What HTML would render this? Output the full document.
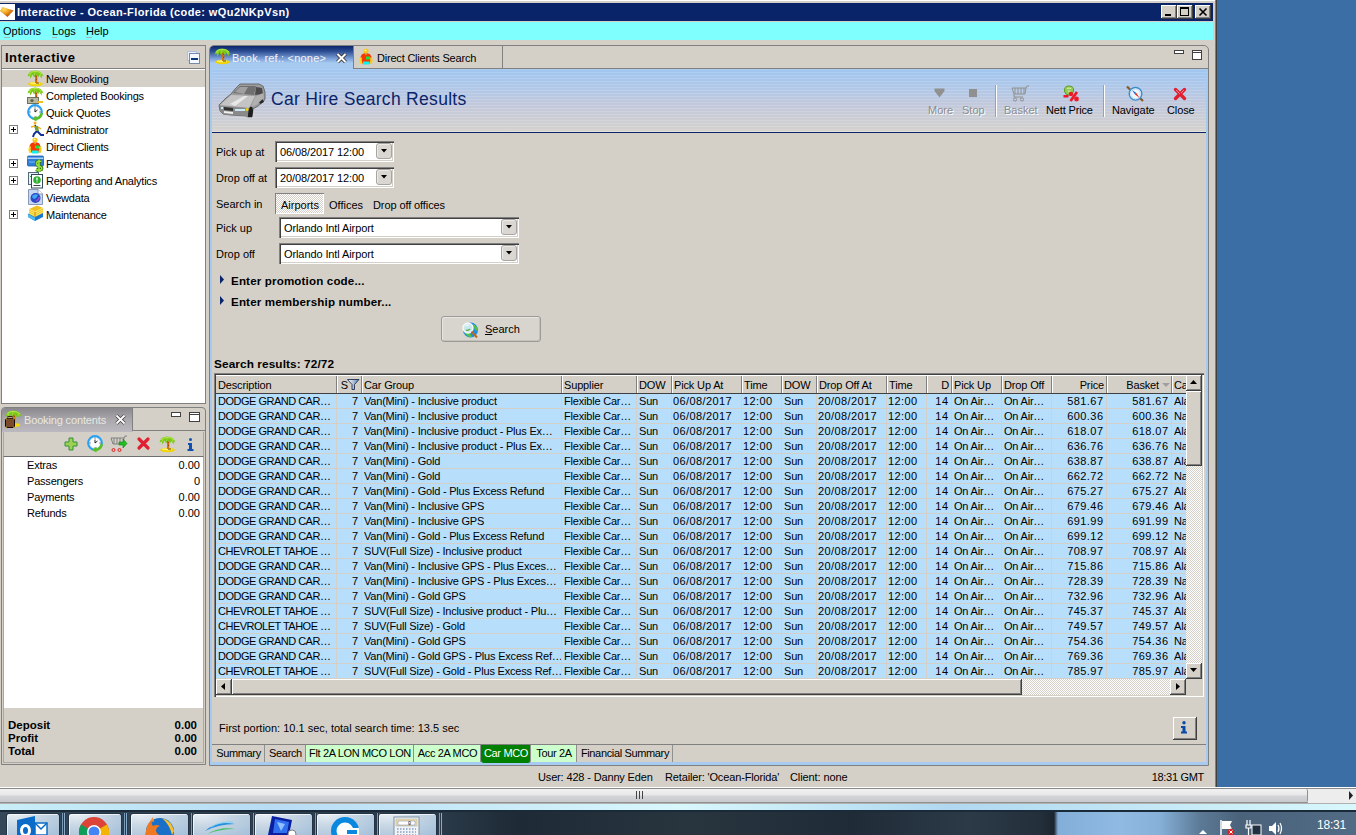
<!DOCTYPE html><html><head><meta charset="utf-8"><style>
*{margin:0;padding:0;box-sizing:border-box}
html,body{width:1356px;height:835px;overflow:hidden;background:#3A6EA5;font-family:"Liberation Sans",sans-serif;font-size:11px;color:#000}
.ab{position:absolute}
.t{position:absolute;white-space:nowrap;line-height:13px}
.sunk{border-style:solid;border-width:1px;border-color:#808080 #fff #fff #808080}
.rais{position:absolute;background:#D4D0C8;box-shadow:inset -1px -1px #404040,inset 1px 1px #fff,inset -2px -2px #808080}
.chk{background-color:#fff;background-image:linear-gradient(45deg,#D4D0C8 25%,transparent 25%,transparent 75%,#D4D0C8 75%),linear-gradient(45deg,#D4D0C8 25%,transparent 25%,transparent 75%,#D4D0C8 75%);background-size:2px 2px;background-position:0 0,1px 1px}
svg{position:absolute;overflow:visible}
</style></head><body>
<div class="ab" style="left:0px;top:0px;width:1217px;height:787px;background:#D4D0C8"></div>
<div class="ab" style="left:0px;top:0px;width:1217px;height:1px;background:#fff"></div>
<div class="ab" style="left:1215px;top:0px;width:1px;height:787px;background:#808080"></div>
<div class="ab" style="left:1216px;top:0px;width:1px;height:787px;background:#404040"></div>
<div class="ab" style="left:0px;top:3px;width:1213px;height:18px;background:#0A246A"></div>
<div class="ab" style="left:0px;top:4px;width:15px;height:16px;background:#fff"></div>
<svg style="left:0;top:0" width="15" height="20"><defs><radialGradient id="gem" cx="0.3" cy="0.25" r="0.8"><stop offset="0" stop-color="#FFE060"/><stop offset="0.45" stop-color="#F0A020"/><stop offset="1" stop-color="#B84000"/></radialGradient></defs><polygon points="0,11 2.5,7 13.5,10.5 7.5,17" fill="url(#gem)"/></svg>
<div class="t" style="left:17px;top:6px;font-size:11px;color:#fff;font-weight:bold;letter-spacing:0.4px">Interactive - Ocean-Florida (code: wQu2NKpVsn)</div>
<div class="rais" style="left:1161px;top:5px;width:16px;height:14px"></div>
<div class="rais" style="left:1177px;top:5px;width:16px;height:14px"></div>
<div class="rais" style="left:1195px;top:5px;width:16px;height:14px"></div>
<div class="ab" style="left:1165px;top:14px;width:6px;height:2px;background:#000"></div>
<div class="ab" style="left:1180px;top:7px;width:9px;height:9px;border:1px solid #000;border-top-width:2px"></div>
<svg style="left:1195px;top:5px" width="16" height="14"><path d="M4.5,3.5 L11.5,10.5 M11.5,3.5 L4.5,10.5" stroke="#000" stroke-width="1.6"/></svg>
<div class="ab" style="left:0px;top:22px;width:1213px;height:18px;background:#80FFFF"></div>
<div class="t" style="left:3px;top:25px;font-size:11px;">Options</div>
<div class="t" style="left:52px;top:25px;font-size:11px;">Logs</div>
<div class="t" style="left:86px;top:25px;font-size:11px;">Help</div>
<div class="ab" style="left:4px;top:37px;width:6px;height:1px;background:#A0B8B8"></div>
<div class="ab" style="left:52px;top:37px;width:5px;height:1px;background:#A0B8B8"></div>
<div class="ab" style="left:86px;top:37px;width:6px;height:1px;background:#A0B8B8"></div>
<div class="ab" style="left:1px;top:45px;width:205px;height:359px;border:1px solid #808080;background:#fff"></div>
<div class="ab" style="left:2px;top:46px;width:203px;height:22px;background:#D4D0C8"></div>
<div class="ab" style="left:2px;top:68px;width:203px;height:1px;background:#808080"></div>
<div class="t" style="left:5px;top:51px;font-size:13px;font-weight:bold;letter-spacing:0.5px">Interactive</div>
<div class="ab" style="left:187px;top:51px;width:10px;height:10px;border:1px solid #B0C0D8;background:#E8F0FF"></div>
<div class="ab" style="left:189px;top:53px;width:11px;height:11px;border:1px solid #7888A8;background:#F4F8FF"></div>
<div class="ab" style="left:191px;top:58px;width:7px;height:2px;background:#0A3A7A"></div>
<div class="ab" style="left:2px;top:70px;width:203px;height:17px;background:#D4D0C8"></div>
<div class="t" style="left:46px;top:73px;font-size:11px;letter-spacing:-0.2px">New Booking</div>
<div class="t" style="left:46px;top:90px;font-size:11px;letter-spacing:-0.2px">Completed Bookings</div>
<div class="t" style="left:46px;top:107px;font-size:11px;letter-spacing:-0.2px">Quick Quotes</div>
<div class="t" style="left:46px;top:124px;font-size:11px;letter-spacing:-0.2px">Administrator</div>
<div class="ab" style="left:9px;top:125px;width:9px;height:9px;border:1px solid #808080;background:#fff"></div>
<div class="ab" style="left:11px;top:129px;width:5px;height:1px;background:#000"></div>
<div class="ab" style="left:13px;top:127px;width:1px;height:5px;background:#000"></div>
<div class="t" style="left:46px;top:141px;font-size:11px;letter-spacing:-0.2px">Direct Clients</div>
<div class="t" style="left:46px;top:158px;font-size:11px;letter-spacing:-0.2px">Payments</div>
<div class="ab" style="left:9px;top:159px;width:9px;height:9px;border:1px solid #808080;background:#fff"></div>
<div class="ab" style="left:11px;top:163px;width:5px;height:1px;background:#000"></div>
<div class="ab" style="left:13px;top:161px;width:1px;height:5px;background:#000"></div>
<div class="t" style="left:46px;top:175px;font-size:11px;letter-spacing:-0.2px">Reporting and Analytics</div>
<div class="ab" style="left:9px;top:176px;width:9px;height:9px;border:1px solid #808080;background:#fff"></div>
<div class="ab" style="left:11px;top:180px;width:5px;height:1px;background:#000"></div>
<div class="ab" style="left:13px;top:178px;width:1px;height:5px;background:#000"></div>
<div class="t" style="left:46px;top:192px;font-size:11px;letter-spacing:-0.2px">Viewdata</div>
<div class="t" style="left:46px;top:209px;font-size:11px;letter-spacing:-0.2px">Maintenance</div>
<div class="ab" style="left:9px;top:210px;width:9px;height:9px;border:1px solid #808080;background:#fff"></div>
<div class="ab" style="left:11px;top:214px;width:5px;height:1px;background:#000"></div>
<div class="ab" style="left:13px;top:212px;width:1px;height:5px;background:#000"></div>
<svg style="left:27px;top:70px" width="17" height="17"><ellipse cx="8.5" cy="14" rx="7.5" ry="2.2" fill="#F2D200"/><ellipse cx="8" cy="13.2" rx="5" ry="1" fill="#FFF070"/><path d="M9,13 L12,13" stroke="#504010" stroke-width="1"/><path d="M8,3 Q10,8 9,13" stroke="#D07010" stroke-width="2.2" fill="none"/><path d="M8.6,6 L9.6,6.5 M9.2,9 L10,9.5" stroke="#803000" stroke-width="1"/><path d="M0.5,6.5 Q1.5,0.5 8,0.5 Q15,0.5 16.5,6.5 L15,5.5 L14.5,8.5 L12.5,5 L11,7.5 L9,4 L7,7.5 L5.5,4.5 L3.5,8.5 L2.5,5.5 Z" fill="#78C818"/><path d="M2,4 Q5,1 8,1.5 Q12,1 15,4" stroke="#B8E848" stroke-width="1" fill="none"/><path d="M4,3 L3,6 M13,3 L14,6 M8,2 L7.5,5" stroke="#A8E038" stroke-width="0.8"/></svg>
<svg style="left:27px;top:87px" width="17" height="17"><path d="M8,3 Q10,8 9,13" stroke="#D07010" stroke-width="2.2" fill="none"/><path d="M8.6,6 L9.6,6.5 M9.2,9 L10,9.5" stroke="#803000" stroke-width="1"/><path d="M0.5,6.5 Q1.5,0.5 8,0.5 Q15,0.5 16.5,6.5 L15,5.5 L14.5,8.5 L12.5,5 L11,7.5 L9,4 L7,7.5 L5.5,4.5 L3.5,8.5 L2.5,5.5 Z" fill="#78C818"/><path d="M2,4 Q5,1 8,1.5 Q12,1 15,4" stroke="#B8E848" stroke-width="1" fill="none"/><path d="M4,3 L3,6 M13,3 L14,6 M8,2 L7.5,5" stroke="#A8E038" stroke-width="0.8"/></svg>
<svg style="left:27px;top:97px" width="17" height="8"><rect x="0.5" y="0.5" width="11" height="6" fill="#B8B8A0" stroke="#707060"/><circle cx="5" cy="3.5" r="1.6" fill="#606050"/><path d="M11,4 L16,4 L16,6 L11,6" fill="#F0C020"/></svg>
<svg style="left:27px;top:104px" width="17" height="17"><circle cx="8" cy="8" r="6.8" fill="#fff" stroke="#2AA0F0" stroke-width="2.2"/><circle cx="8" cy="8" r="5.2" fill="none" stroke="#D8E0E8" stroke-width="0.6"/><path d="M8,2.5 L8,3.5 M8,12.5 L8,13.5 M2.5,8 L3.5,8 M12.5,8 L13.5,8" stroke="#303030" stroke-width="0.9"/><path d="M8,4.5 L8,8 L10.5,6" stroke="#202020" stroke-width="1" fill="none"/><path d="M9,14.8 Q14,14 14.8,9" stroke="#58C020" stroke-width="2.4" fill="none"/><path d="M5,15 L9.5,11.8 L9.5,17.5Z" fill="#58C020"/></svg>
<svg style="left:28px;top:121px" width="17" height="17"><circle cx="7" cy="2" r="1.5" fill="#F0B020"/><path d="M7,4 L9,10 L13,14 L16,14 M9,10 L6,13 L5,16" stroke="#1030A0" stroke-width="2" fill="none"/><path d="M6,5 L10,5 L11,10 L8,10 Z" fill="#70A040"/><path d="M3,6 L7,5 M10,6 L13,8" stroke="#F0B020" stroke-width="1.5"/></svg>
<svg style="left:27px;top:137px" width="17" height="17"><ellipse cx="8" cy="3" rx="2.6" ry="2.3" fill="#F8C818"/><ellipse cx="7.5" cy="2.5" rx="1" ry="0.7" fill="#FFF8C0"/><path d="M2.5,9.5 Q3,5.2 8,5.2 Q13,5.2 13.5,9.5 L12.5,15.5 L3.5,15.5 Z" fill="#F43800"/><path d="M7,5.5 L8,7.5 L9,5.5Z" fill="#F8D020"/><path d="M3,9 Q0,12 2.5,16 L4.5,15.5 Q3,12 4,10Z" fill="#F8D818"/><path d="M13,9 Q16,12 13.5,16 L11.5,15.5 Q13,12 12,10Z" fill="#F8C818"/><rect x="8" y="8.5" width="4" height="3" fill="#20E040"/><rect x="5" y="13.5" width="6.5" height="3" fill="#10F0F0"/></svg>
<svg style="left:27px;top:155px" width="18" height="18"><rect x="0.5" y="1" width="16" height="10" rx="1" fill="#2F7FD8" stroke="#1A5AA8" stroke-width="0.8"/><rect x="0.5" y="2.5" width="16" height="1.5" fill="#A8D0F8"/><path d="M2,7 L8,7" stroke="#80B8F0" stroke-width="1"/><path d="M14.5,6.5 Q10,5 9.5,8.5 Q10,11 13,11.5 Q15.5,12.5 14.5,14.5 Q12,16 9,14.5 M12,4.5 L12,17" stroke="#2A7010" stroke-width="3.2" fill="none"/><path d="M14.5,6.5 Q10,5 9.5,8.5 Q10,11 13,11.5 Q15.5,12.5 14.5,14.5 Q12,16 9,14.5 M12,4.5 L12,17" stroke="#98E040" stroke-width="1.6" fill="none"/></svg>
<svg style="left:28px;top:172px" width="17" height="17"><rect x="0.5" y="0.5" width="10" height="12" fill="#E8F0F8" stroke="#506878"/><path d="M2,5 Q3,3 5,4" stroke="#40A040" fill="none"/><rect x="3.5" y="2.5" width="11" height="13.5" fill="#fff" stroke="#304858"/><circle cx="9" cy="8" r="3.8" fill="#30B030"/><path d="M9,5.5 L9,8.5 M9,9.5 L9,10.3" stroke="#fff" stroke-width="1.3"/><path d="M5.5,13.5 L12.5,13.5" stroke="#304858"/></svg>
<svg style="left:28px;top:189px" width="17" height="17"><path d="M0.5,0.5 L10,0.5 L14.5,5 L14.5,15.5 L0.5,15.5Z" fill="#C8D8F0" stroke="#8898B8"/><path d="M10,0.5 L10,5 L14.5,5" fill="#fff" stroke="#8898B8"/><circle cx="7.5" cy="9" r="5" fill="#2848C8"/><path d="M4,7 Q7,4 10,6 Q9,9 6,10 Q4,9 4,7Z" fill="#40A8F0"/><path d="M8,12 Q11,11 11.5,8" stroke="#9050D0" stroke-width="1.5" fill="none"/></svg>
<svg style="left:27px;top:205px" width="17" height="17"><path d="M1,9 L9,5 L16,8 L16,12 L8,16 L1,12Z" fill="#1878D0"/><path d="M1,9 L8,12.5 L8,16 L1,12Z" fill="#50B8F0"/><path d="M2,4 L10,0.5 L16,3 L16,8 L8,12 L2,9Z" fill="#F0C020"/><path d="M2,4 L8,7 L16,3 M2,6 L8,9 L16,5 M2,8 L8,11 L16,7" stroke="#FFF080" stroke-width="0.9" fill="none"/><path d="M8,7 L8,12" stroke="#C89000"/></svg>
<div class="ab" style="left:1px;top:407px;width:205px;height:358px;border:1px solid #808080;border-radius:4px 4px 0 0;background:#D4D0C8"></div>
<div class="ab" style="left:2px;top:408px;width:131px;height:24px;background:linear-gradient(#8A888C,#A8A6AA 45%,#BCBAC0 100%);border-radius:3px 0 0 0"></div>
<div class="ab" style="left:132px;top:408px;width:1px;height:23px;background:#808080"></div>
<div class="ab" style="left:133px;top:430px;width:72px;height:1px;background:#808080"></div>
<svg style="left:5px;top:410px" width="17" height="17"><path d="M8,3 Q10,8 9,13" stroke="#D07010" stroke-width="2.2" fill="none"/><path d="M8.6,6 L9.6,6.5 M9.2,9 L10,9.5" stroke="#803000" stroke-width="1"/><path d="M0.5,6.5 Q1.5,0.5 8,0.5 Q15,0.5 16.5,6.5 L15,5.5 L14.5,8.5 L12.5,5 L11,7.5 L9,4 L7,7.5 L5.5,4.5 L3.5,8.5 L2.5,5.5 Z" fill="#78C818"/><path d="M2,4 Q5,1 8,1.5 Q12,1 15,4" stroke="#B8E848" stroke-width="1" fill="none"/><path d="M4,3 L3,6 M13,3 L14,6 M8,2 L7.5,5" stroke="#A8E038" stroke-width="0.8"/></svg>
<svg style="left:5px;top:416px" width="16" height="12"><rect x="0.5" y="2.5" width="9" height="9" rx="1" fill="#7A4A2A" stroke="#1A0A00"/><path d="M0.5,2.5 h1 M8.5,2.5 h1 M0.5,11.5 h1 M8.5,11.5 h1" stroke="#F8E000" stroke-width="1.5"/><rect x="3" y="0.5" width="4" height="2" fill="none" stroke="#402010"/><path d="M10,7 L15,8 L15,10 L10,11Z" fill="#F8D800"/></svg>
<div class="t" style="left:24px;top:414px;font-size:11px;color:#E8E8E0;letter-spacing:-0.15px">Booking contents</div>
<svg style="left:115px;top:414px" width="11" height="11"><path d="M1.5,1.5 L9.5,9.5 M9.5,1.5 L1.5,9.5" stroke="#404040" stroke-width="3.2"/><path d="M1.5,1.5 L9.5,9.5 M9.5,1.5 L1.5,9.5" stroke="#fff" stroke-width="1.8"/></svg>
<div class="ab" style="left:171px;top:412px;width:10px;height:5px;border:1px solid #404040;background:#fff"></div>
<div class="ab" style="left:189px;top:412px;width:11px;height:10px;border:1px solid #404040;background:linear-gradient(#fff 0 1px,#404040 1px 2px,#fff 2px)"></div>
<div class="ab" style="left:3px;top:432px;width:201px;height:25px;background:#D4D0C8;border-left:1px solid #A8A8A8;border-right:1px solid #A8A8A8;border-bottom:1px solid #707070"></div>
<svg style="left:64px;top:437px" width="14" height="14"><path d="M5,1 L9,1 L9,5 L13,5 L13,9 L9,9 L9,13 L5,13 L5,9 L1,9 L1,5 L5,5 Z" fill="#A0D050" stroke="#309040" stroke-width="1"/></svg>
<svg style="left:87px;top:435px" width="17" height="17"><circle cx="8" cy="8" r="6.8" fill="#fff" stroke="#2AA0F0" stroke-width="2.2"/><circle cx="8" cy="8" r="5.2" fill="none" stroke="#D8E0E8" stroke-width="0.6"/><path d="M8,2.5 L8,3.5 M8,12.5 L8,13.5 M2.5,8 L3.5,8 M12.5,8 L13.5,8" stroke="#303030" stroke-width="0.9"/><path d="M8,4.5 L8,8 L10.5,6" stroke="#202020" stroke-width="1" fill="none"/><path d="M9,14.8 Q14,14 14.8,9" stroke="#58C020" stroke-width="2.4" fill="none"/><path d="M5,15 L9.5,11.8 L9.5,17.5Z" fill="#58C020"/></svg>
<svg style="left:110px;top:436px" width="18" height="17"><path d="M1,2 L14,2 L13,8 L3,8 Z M4,2 L4,8 M7,2 L7,8 M10,2 L10,8 M14,2 L15,0 L17,0" stroke="#808080" fill="none"/><circle cx="3.5" cy="14" r="1.5" fill="none" stroke="#E02020"/><circle cx="9.5" cy="14" r="1.5" fill="none" stroke="#E02020"/><path d="M9,6 L13,6 L13,3 L17,7.5 L13,12 L13,9 L9,9 Z" fill="#20C020" stroke="#108010" stroke-width="0.6"/></svg>
<svg style="left:137px;top:437px" width="13" height="13"><path d="M2,2 L11,11 M11,2 L2,11" stroke="#E02030" stroke-width="3.2" stroke-linecap="round"/></svg>
<svg style="left:159px;top:436px" width="17" height="17"><ellipse cx="8.5" cy="14" rx="7.5" ry="2.2" fill="#F2D200"/><ellipse cx="8" cy="13.2" rx="5" ry="1" fill="#FFF070"/><path d="M9,13 L12,13" stroke="#504010" stroke-width="1"/><path d="M8,3 Q10,8 9,13" stroke="#D07010" stroke-width="2.2" fill="none"/><path d="M8.6,6 L9.6,6.5 M9.2,9 L10,9.5" stroke="#803000" stroke-width="1"/><path d="M0.5,6.5 Q1.5,0.5 8,0.5 Q15,0.5 16.5,6.5 L15,5.5 L14.5,8.5 L12.5,5 L11,7.5 L9,4 L7,7.5 L5.5,4.5 L3.5,8.5 L2.5,5.5 Z" fill="#78C818"/><path d="M2,4 Q5,1 8,1.5 Q12,1 15,4" stroke="#B8E848" stroke-width="1" fill="none"/><path d="M4,3 L3,6 M13,3 L14,6 M8,2 L7.5,5" stroke="#A8E038" stroke-width="0.8"/></svg>
<svg style="left:187px;top:438px" width="8" height="14"><circle cx="3.5" cy="1.5" r="1.5" fill="#1050B0"/><path d="M1,5 L5,5 L5,11 L6.5,11 L6.5,13 L0.5,13 L0.5,11 L2,11 L2,7 L1,7Z" fill="#1050B0"/></svg>
<div class="ab" style="left:4px;top:457px;width:199px;height:251px;background:#fff"></div>
<div class="ab" style="left:3px;top:457px;width:1px;height:306px;background:#A8A8A8"></div>
<div class="ab" style="left:203px;top:457px;width:1px;height:306px;background:#A8A8A8"></div>
<div class="ab" style="left:3px;top:762px;width:201px;height:1px;background:#A8A8A8"></div>
<div class="t" style="left:27px;top:459px;font-size:11px;letter-spacing:-0.2px">Extras</div>
<div class="t" style="right:1156px;top:459px;font-size:11px;text-align:right;">0.00</div>
<div class="t" style="left:27px;top:475px;font-size:11px;letter-spacing:-0.2px">Passengers</div>
<div class="t" style="right:1156px;top:475px;font-size:11px;text-align:right;">0</div>
<div class="t" style="left:27px;top:491px;font-size:11px;letter-spacing:-0.2px">Payments</div>
<div class="t" style="right:1156px;top:491px;font-size:11px;text-align:right;">0.00</div>
<div class="t" style="left:27px;top:507px;font-size:11px;letter-spacing:-0.2px">Refunds</div>
<div class="t" style="right:1156px;top:507px;font-size:11px;text-align:right;">0.00</div>
<div class="t" style="left:8px;top:719px;font-size:11.5px;font-weight:bold">Deposit</div>
<div class="t" style="right:1159px;top:719px;font-size:11.5px;text-align:right;font-weight:bold">0.00</div>
<div class="t" style="left:8px;top:732px;font-size:11.5px;font-weight:bold">Profit</div>
<div class="t" style="right:1159px;top:732px;font-size:11.5px;text-align:right;font-weight:bold">0.00</div>
<div class="t" style="left:8px;top:745px;font-size:11.5px;font-weight:bold">Total</div>
<div class="t" style="right:1159px;top:745px;font-size:11.5px;text-align:right;font-weight:bold">0.00</div>
<div class="ab" style="left:209px;top:45px;width:1000px;height:721px;border:1px solid #808080;border-radius:5px 5px 0 0;background:#D4D0C8"></div>
<div class="ab" style="left:210px;top:69px;width:2px;height:695px;background:#A6CAF0"></div>
<div class="ab" style="left:1206px;top:69px;width:2px;height:695px;background:#A6CAF0"></div>
<div class="ab" style="left:210px;top:762px;width:998px;height:3px;background:#A6CAF0"></div>
<div class="ab" style="left:210px;top:46px;width:143px;height:23px;background:linear-gradient(#0A246A 0px,#2A4A90 5px,#7FA3DA 13px,#A6CAF0 17px,#A6CAF0);border-radius:4px 0 0 0"></div>
<div class="ab" style="left:353px;top:46px;width:150px;height:22px;background:#D4D0C8;border-left:1px solid #808080;border-right:1px solid #808080"></div>
<div class="ab" style="left:353px;top:68px;width:855px;height:1px;background:#808080"></div>
<svg style="left:214px;top:48px" width="17" height="17"><ellipse cx="8.5" cy="14" rx="7.5" ry="2.2" fill="#F2D200"/><ellipse cx="8" cy="13.2" rx="5" ry="1" fill="#FFF070"/><path d="M9,13 L12,13" stroke="#504010" stroke-width="1"/><path d="M8,3 Q10,8 9,13" stroke="#D07010" stroke-width="2.2" fill="none"/><path d="M8.6,6 L9.6,6.5 M9.2,9 L10,9.5" stroke="#803000" stroke-width="1"/><path d="M0.5,6.5 Q1.5,0.5 8,0.5 Q15,0.5 16.5,6.5 L15,5.5 L14.5,8.5 L12.5,5 L11,7.5 L9,4 L7,7.5 L5.5,4.5 L3.5,8.5 L2.5,5.5 Z" fill="#78C818"/><path d="M2,4 Q5,1 8,1.5 Q12,1 15,4" stroke="#B8E848" stroke-width="1" fill="none"/><path d="M4,3 L3,6 M13,3 L14,6 M8,2 L7.5,5" stroke="#A8E038" stroke-width="0.8"/></svg>
<div class="t" style="left:232px;top:52px;font-size:11px;color:#F4F4F4;letter-spacing:0.2px">Book. ref.: &lt;none&gt;</div>
<svg style="left:336px;top:53px" width="11" height="10"><path d="M1.5,1 L9.5,9 M9.5,1 L1.5,9" stroke="#303030" stroke-width="3.8"/><path d="M1.5,1 L9.5,9 M9.5,1 L1.5,9" stroke="#fff" stroke-width="2"/></svg>
<svg style="left:358px;top:48px" width="17" height="17"><ellipse cx="8" cy="3" rx="2.6" ry="2.3" fill="#F8C818"/><ellipse cx="7.5" cy="2.5" rx="1" ry="0.7" fill="#FFF8C0"/><path d="M2.5,9.5 Q3,5.2 8,5.2 Q13,5.2 13.5,9.5 L12.5,15.5 L3.5,15.5 Z" fill="#F43800"/><path d="M7,5.5 L8,7.5 L9,5.5Z" fill="#F8D020"/><path d="M3,9 Q0,12 2.5,16 L4.5,15.5 Q3,12 4,10Z" fill="#F8D818"/><path d="M13,9 Q16,12 13.5,16 L11.5,15.5 Q13,12 12,10Z" fill="#F8C818"/><rect x="8" y="8.5" width="4" height="3" fill="#20E040"/><rect x="5" y="13.5" width="6.5" height="3" fill="#10F0F0"/></svg>
<div class="t" style="left:377px;top:52px;font-size:11px;letter-spacing:-0.2px">Direct Clients Search</div>
<div class="ab" style="left:1174px;top:50px;width:10px;height:4px;border:1px solid #404040;background:#fff"></div>
<div class="ab" style="left:1192px;top:50px;width:10px;height:10px;border:1px solid #404040;background:linear-gradient(#fff 0 1px,#404040 1px 2px,#fff 2px)"></div>
<div class="ab" style="left:212px;top:69px;width:994px;height:63px;background:repeating-linear-gradient(rgba(255,255,255,0.08) 0 1px,rgba(0,0,0,0.018) 1px 3px),linear-gradient(#A4CAF4 0,#B4CCEC 30%,#C6CCE0 55%,#D0D2D8 80%,#D8D6D0 100%)"></div>
<div class="ab" style="left:212px;top:131px;width:994px;height:1px;background:#E6E2DC"></div>
<div class="ab" style="left:212px;top:132px;width:994px;height:1px;background:#0A246A"></div>
<svg style="left:218px;top:83px" width="48" height="35">
<path d="M1,22 L8,15 L13,11 L17,6 L22,1 L41,1 L45,3 L47,9 L47,16 L45,19 L40,23 L35,26 L34,34 L30,34 L28,33 L13,32 L5,31 L2,28 Z" fill="#9C9C9C" stroke="#5A5A5A" stroke-width="0.8"/>
<path d="M15,10 L22,3 L38,3 L36,12 Z" fill="#707070"/>
<path d="M17,9 L22,4 L30,4 L26,11Z" fill="#A0A0A0"/>
<path d="M38,4 L44,5 L45,11 L37,12Z" fill="#4A4A4A"/>
<path d="M2,22 L13,12 L37,13 L31,25 Z" fill="#C4C4C4"/>
<path d="M12,21 L26,13 L30,13 L17,23Z" fill="#E8E8E8"/>
<path d="M2,23 L31,25 L31,33 L13,32 L5,31 L2,28Z" fill="#8A8A8A"/>
<path d="M6,24 L15,25 L15,28 L6,27Z" fill="#303030"/>
<path d="M17,26 L27,26 L27,28 L17,28Z" fill="#C8E8F8"/>
<circle cx="29" cy="26.5" r="1.6" fill="#F0D000"/>
<path d="M3,24 L5,24 L5,26 L3,26Z" fill="#C8E8F8"/>
<path d="M6,28 L15,29 L15,31 L6,30Z" fill="#F0F0F0"/>
<path d="M32,24 Q35,22 35,29 L34,34 L30,34 Q30,27 32,24Z" fill="#1E1E1E"/>
<path d="M40,17 L44,15 L46,19 L42,21Z" fill="#2A2A2A"/>
<path d="M37,14 L45,10 L46,15 L38,22 L33,24Z" fill="#B0B0B0"/>
</svg>
<div class="t" style="left:271px;top:93px;font-size:17.5px;color:#0A246A;letter-spacing:0.3px">Car Hire Search Results</div>
<svg style="left:934px;top:88px" width="12" height="10"><path d="M0.5,0.5 L10.5,0.5 L10.5,3 L5.5,9.5 L0.5,3Z" fill="#909090"/></svg>
<div class="t" style="left:929px;top:105px;font-size:11px;color:#fff">More</div>
<div class="t" style="left:928px;top:104px;font-size:11px;color:#8C8C8C">More</div>
<div class="ab" style="left:969px;top:89px;width:8px;height:8px;background:#909090"></div>
<div class="t" style="left:963px;top:105px;font-size:11px;color:#fff">Stop</div>
<div class="t" style="left:962px;top:104px;font-size:11px;color:#8C8C8C">Stop</div>
<div class="ab" style="left:995px;top:85px;width:1px;height:32px;background:#A0A0A0;box-shadow:1px 0 #fff"></div>
<svg style="left:1011px;top:85px" width="18" height="17"><path d="M1,3 L15,3 L14,9 L3,9 Z M4,3 L4,9 M7,3 L7,9 M10,3 L10,9 M13,3 L13,9 M15,3 L16,1 L18,1 M3,9 L3,12 L12,12" stroke="#909090" fill="none"/><circle cx="4" cy="14.5" r="1.6" fill="none" stroke="#909090"/><circle cx="11" cy="14.5" r="1.6" fill="none" stroke="#909090"/></svg>
<div class="t" style="left:1005px;top:105px;font-size:11px;color:#fff">Basket</div>
<div class="t" style="left:1004px;top:104px;font-size:11px;color:#8C8C8C">Basket</div>
<svg style="left:1062px;top:85px" width="18" height="17"><path d="M2.5,6 Q2,1 7,1 Q12,1 11.5,6 Q11,10 7,10 Q3,10 2.5,6Z" fill="#98CC58" stroke="#5A9A28" stroke-width="1"/><path d="M5,3.5 Q7,2.5 9,3.5 M6,6 Q8,6 8.5,7" stroke="#D8F0B0" stroke-width="1" fill="none"/><rect x="1.5" y="10" width="5" height="2.5" fill="#F01828"/><circle cx="9" cy="9" r="2.2" fill="#F01828"/><circle cx="14.5" cy="14" r="2.4" fill="#F01828"/><path d="M15,7 L8.5,16" stroke="#F01828" stroke-width="2.8"/></svg>
<div class="t" style="left:1046px;top:104px;font-size:11px;letter-spacing:-0.15px">Nett Price</div>
<div class="ab" style="left:1103px;top:85px;width:1px;height:32px;background:#A0A0A0;box-shadow:1px 0 #fff"></div>
<svg style="left:1126px;top:85px" width="18" height="17"><path d="M1,1.5 L4,4.5 M17,16 L14,13" stroke="#8A5A20" stroke-width="2.2"/><circle cx="9.5" cy="8.8" r="6.3" fill="#EEF6FC" stroke="#3C8CCC" stroke-width="1.4"/><circle cx="9.5" cy="8.8" r="4.8" fill="none" stroke="#B8D8F0" stroke-width="0.8"/><path d="M6,5 L10.3,8 L9,9.6Z" fill="#2060D0"/><path d="M13.5,12.8 L10.3,8 L9,9.6Z" fill="#F02818"/></svg>
<div class="t" style="left:1112px;top:104px;font-size:11px;letter-spacing:-0.1px">Navigate</div>
<svg style="left:1173px;top:87px" width="14" height="14"><path d="M2.5,2.5 L11.5,11.5 M11.5,2.5 L2.5,11.5" stroke="#E02030" stroke-width="3.4" stroke-linecap="round"/><path d="M3,3 L7,7 M11,3 L8,6" stroke="#FF8090" stroke-width="1"/></svg>
<div class="t" style="left:1167px;top:104px;font-size:11px;letter-spacing:-0.1px">Close</div>
<div class="t" style="left:216px;top:146px;font-size:11px;">Pick up at</div>
<div class="ab" style="left:275px;top:141px;width:119px;height:21px;background:#fff;box-shadow:inset 1px 1px #808080,inset 2px 2px #404040,inset -1px -1px #fff,inset -2px -2px #D4D0C8"></div>
<div class="t" style="left:280px;top:146px;font-size:11px;letter-spacing:-0.1px">06/08/2017 12:00</div>
<div class="ab" style="left:376px;top:143px;width:16px;height:16px;background:#DAD6D2;border:1px solid #A8A4A0;border-radius:3px;box-shadow:inset 1px 1px #ECEAE8"></div>
<svg style="left:381px;top:149px" width="6" height="4"><path d="M0,0 L6,0 L3,3.5Z" fill="#000"/></svg>
<div class="t" style="left:216px;top:172px;font-size:11px;">Drop off at</div>
<div class="ab" style="left:275px;top:167px;width:119px;height:21px;background:#fff;box-shadow:inset 1px 1px #808080,inset 2px 2px #404040,inset -1px -1px #fff,inset -2px -2px #D4D0C8"></div>
<div class="t" style="left:280px;top:172px;font-size:11px;letter-spacing:-0.1px">20/08/2017 12:00</div>
<div class="ab" style="left:376px;top:169px;width:16px;height:16px;background:#DAD6D2;border:1px solid #A8A4A0;border-radius:3px;box-shadow:inset 1px 1px #ECEAE8"></div>
<svg style="left:381px;top:175px" width="6" height="4"><path d="M0,0 L6,0 L3,3.5Z" fill="#000"/></svg>
<div class="t" style="left:216px;top:198px;font-size:11px;">Search in</div>
<div class="ab chk" style="left:275px;top:193px;width:49px;height:21px;box-shadow:inset 1px 1px #808080,inset -1px -1px #fff"></div>
<div class="t" style="left:281px;top:199px;font-size:11px;">Airports</div>
<div class="t" style="left:329px;top:199px;font-size:11px;">Offices</div>
<div class="t" style="left:373px;top:199px;font-size:11px;letter-spacing:-0.1px">Drop off offices</div>
<div class="t" style="left:216px;top:222px;font-size:11px;">Pick up</div>
<div class="ab" style="left:279px;top:217px;width:240px;height:21px;background:#fff;box-shadow:inset 1px 1px #808080,inset 2px 2px #404040,inset -1px -1px #fff,inset -2px -2px #D4D0C8"></div>
<div class="t" style="left:284px;top:222px;font-size:11px;letter-spacing:-0.1px">Orlando Intl Airport</div>
<div class="ab" style="left:501px;top:219px;width:16px;height:16px;background:#DAD6D2;border:1px solid #A8A4A0;border-radius:3px;box-shadow:inset 1px 1px #ECEAE8"></div>
<svg style="left:506px;top:225px" width="6" height="4"><path d="M0,0 L6,0 L3,3.5Z" fill="#000"/></svg>
<div class="t" style="left:216px;top:248px;font-size:11px;">Drop off</div>
<div class="ab" style="left:279px;top:243px;width:240px;height:21px;background:#fff;box-shadow:inset 1px 1px #808080,inset 2px 2px #404040,inset -1px -1px #fff,inset -2px -2px #D4D0C8"></div>
<div class="t" style="left:284px;top:248px;font-size:11px;letter-spacing:-0.1px">Orlando Intl Airport</div>
<div class="ab" style="left:501px;top:245px;width:16px;height:16px;background:#DAD6D2;border:1px solid #A8A4A0;border-radius:3px;box-shadow:inset 1px 1px #ECEAE8"></div>
<svg style="left:506px;top:251px" width="6" height="4"><path d="M0,0 L6,0 L3,3.5Z" fill="#000"/></svg>
<svg style="left:220px;top:275px" width="5" height="9"><path d="M0,0 L4,4.5 L0,9Z" fill="#0A246A"/></svg>
<div class="t" style="left:231px;top:274px;font-size:11.6px;font-weight:bold;letter-spacing:0.15px">Enter promotion code...</div>
<svg style="left:220px;top:296px" width="5" height="9"><path d="M0,0 L4,4.5 L0,9Z" fill="#0A246A"/></svg>
<div class="t" style="left:231px;top:295px;font-size:11.6px;font-weight:bold;letter-spacing:0.15px">Enter membership number...</div>
<div class="ab" style="left:441px;top:316px;width:100px;height:26px;background:#D8D4CE;border-radius:3px;border:1px solid #9C9A96;box-shadow:inset 1px 1px #E8E6E2,inset -1px -1px #C4C0BA"></div>
<svg style="left:461px;top:321px" width="19" height="18"><circle cx="9.5" cy="9" r="7.5" fill="#1E8CE8"/><path d="M12,3 Q17,5 16.5,10 L14,9 Q13,6 12,3Z M4,12 Q7,17 11,16 L9,12Z" fill="#58C040"/><circle cx="7" cy="7" r="5" fill="#C8E8F0" stroke="#F8F8F8" stroke-width="1.4"/><path d="M4.5,5 Q6,3.5 8,4" stroke="#fff" stroke-width="1" fill="none"/><path d="M5,9 Q7,10 9,8" stroke="#70B050" stroke-width="1.5" fill="none"/><path d="M10.5,10.5 L16,16.5" stroke="#B86A20" stroke-width="2"/></svg>
<div class="t" style="left:485px;top:323px;font-size:11px;"><u style="text-decoration-thickness:1px">S</u>earch</div>
<div class="t" style="left:214px;top:358px;font-size:11.8px;font-weight:bold;letter-spacing:0.1px">Search results: 72/72</div>
<div class="ab" style="left:214px;top:373px;width:990px;height:324px;box-shadow:inset 1px 1px #808080,inset 2px 2px #404040,inset -1px -1px #fff,inset -2px -2px #D4D0C8"></div>
<div class="ab" style="left:216px;top:375px;width:970px;height:304px;overflow:hidden">
<div class="ab" style="left:0;top:0;width:1100px;height:19px;background:#D4D0C8;border-bottom:1px solid #404040"></div>
<div class="ab" style="left:120px;top:1px;width:1px;height:17px;background:#808080"></div>
<div class="ab" style="left:121px;top:1px;width:1px;height:17px;background:#fff"></div>
<div class="t" style="left:2px;top:4px;letter-spacing:-0.15px">Description</div>
<div class="ab" style="left:145px;top:1px;width:1px;height:17px;background:#808080"></div>
<div class="ab" style="left:146px;top:1px;width:1px;height:17px;background:#fff"></div>
<div class="t" style="left:72px;width:60px;top:4px;text-align:right;letter-spacing:-0.15px">S</div>
<div class="ab" style="left:345px;top:1px;width:1px;height:17px;background:#808080"></div>
<div class="ab" style="left:346px;top:1px;width:1px;height:17px;background:#fff"></div>
<div class="t" style="left:148px;top:4px;letter-spacing:-0.15px">Car Group</div>
<div class="ab" style="left:420px;top:1px;width:1px;height:17px;background:#808080"></div>
<div class="ab" style="left:421px;top:1px;width:1px;height:17px;background:#fff"></div>
<div class="t" style="left:348px;top:4px;letter-spacing:-0.15px">Supplier</div>
<div class="ab" style="left:455px;top:1px;width:1px;height:17px;background:#808080"></div>
<div class="ab" style="left:456px;top:1px;width:1px;height:17px;background:#fff"></div>
<div class="t" style="left:423px;top:4px;letter-spacing:-0.15px">DOW</div>
<div class="ab" style="left:525px;top:1px;width:1px;height:17px;background:#808080"></div>
<div class="ab" style="left:526px;top:1px;width:1px;height:17px;background:#fff"></div>
<div class="t" style="left:458px;top:4px;letter-spacing:-0.15px">Pick Up At</div>
<div class="ab" style="left:565px;top:1px;width:1px;height:17px;background:#808080"></div>
<div class="ab" style="left:566px;top:1px;width:1px;height:17px;background:#fff"></div>
<div class="t" style="left:528px;top:4px;letter-spacing:-0.15px">Time</div>
<div class="ab" style="left:600px;top:1px;width:1px;height:17px;background:#808080"></div>
<div class="ab" style="left:601px;top:1px;width:1px;height:17px;background:#fff"></div>
<div class="t" style="left:568px;top:4px;letter-spacing:-0.15px">DOW</div>
<div class="ab" style="left:670px;top:1px;width:1px;height:17px;background:#808080"></div>
<div class="ab" style="left:671px;top:1px;width:1px;height:17px;background:#fff"></div>
<div class="t" style="left:603px;top:4px;letter-spacing:-0.15px">Drop Off At</div>
<div class="ab" style="left:710px;top:1px;width:1px;height:17px;background:#808080"></div>
<div class="ab" style="left:711px;top:1px;width:1px;height:17px;background:#fff"></div>
<div class="t" style="left:673px;top:4px;letter-spacing:-0.15px">Time</div>
<div class="ab" style="left:735px;top:1px;width:1px;height:17px;background:#808080"></div>
<div class="ab" style="left:736px;top:1px;width:1px;height:17px;background:#fff"></div>
<div class="t" style="left:673px;width:60px;top:4px;text-align:right;letter-spacing:-0.15px">D</div>
<div class="ab" style="left:785px;top:1px;width:1px;height:17px;background:#808080"></div>
<div class="ab" style="left:786px;top:1px;width:1px;height:17px;background:#fff"></div>
<div class="t" style="left:738px;top:4px;letter-spacing:-0.15px">Pick Up</div>
<div class="ab" style="left:835px;top:1px;width:1px;height:17px;background:#808080"></div>
<div class="ab" style="left:836px;top:1px;width:1px;height:17px;background:#fff"></div>
<div class="t" style="left:788px;top:4px;letter-spacing:-0.15px">Drop Off</div>
<div class="ab" style="left:890px;top:1px;width:1px;height:17px;background:#808080"></div>
<div class="ab" style="left:891px;top:1px;width:1px;height:17px;background:#fff"></div>
<div class="t" style="left:828px;width:60px;top:4px;text-align:right;letter-spacing:-0.15px">Price</div>
<div class="ab" style="left:955px;top:1px;width:1px;height:17px;background:#808080"></div>
<div class="ab" style="left:956px;top:1px;width:1px;height:17px;background:#fff"></div>
<div class="t" style="left:883px;width:60px;top:4px;text-align:right;letter-spacing:-0.15px">Basket</div>
<div class="ab" style="left:995px;top:1px;width:1px;height:17px;background:#808080"></div>
<div class="ab" style="left:996px;top:1px;width:1px;height:17px;background:#fff"></div>
<div class="t" style="left:958px;top:4px;letter-spacing:-0.15px">Ca</div>
<div class="ab" style="left:0;top:0;width:1100px;height:1px;background:#fff"></div>
<svg style="left:131px;top:4px" width="13" height="12"><defs><linearGradient id="fg" x1="0" x2="1"><stop offset="0" stop-color="#fff"/><stop offset="1" stop-color="#6080B0"/></linearGradient></defs><path d="M0.5,0.5 L12,0.5 L7.5,5.5 L7.5,10.5 L5,10.5 L5,5.5Z" fill="url(#fg)" stroke="#203050" stroke-width="0.9"/></svg>
<svg style="left:946px;top:8px" width="9" height="5"><path d="M0,0 L8,0 L4,4Z" fill="#A0A0A0"/></svg>
<div class="ab" style="left:0;top:19px;width:1100px;height:285px;background:#B7DEFB"></div>
<div class="ab" style="left:0;top:33px;width:1100px;height:1px;background:#D4D0C8"></div>
<div class="ab" style="left:0;top:48px;width:1100px;height:1px;background:#D4D0C8"></div>
<div class="ab" style="left:0;top:63px;width:1100px;height:1px;background:#D4D0C8"></div>
<div class="ab" style="left:0;top:78px;width:1100px;height:1px;background:#D4D0C8"></div>
<div class="ab" style="left:0;top:93px;width:1100px;height:1px;background:#D4D0C8"></div>
<div class="ab" style="left:0;top:108px;width:1100px;height:1px;background:#D4D0C8"></div>
<div class="ab" style="left:0;top:123px;width:1100px;height:1px;background:#D4D0C8"></div>
<div class="ab" style="left:0;top:138px;width:1100px;height:1px;background:#D4D0C8"></div>
<div class="ab" style="left:0;top:153px;width:1100px;height:1px;background:#D4D0C8"></div>
<div class="ab" style="left:0;top:168px;width:1100px;height:1px;background:#D4D0C8"></div>
<div class="ab" style="left:0;top:183px;width:1100px;height:1px;background:#D4D0C8"></div>
<div class="ab" style="left:0;top:198px;width:1100px;height:1px;background:#D4D0C8"></div>
<div class="ab" style="left:0;top:213px;width:1100px;height:1px;background:#D4D0C8"></div>
<div class="ab" style="left:0;top:228px;width:1100px;height:1px;background:#D4D0C8"></div>
<div class="ab" style="left:0;top:243px;width:1100px;height:1px;background:#D4D0C8"></div>
<div class="ab" style="left:0;top:258px;width:1100px;height:1px;background:#D4D0C8"></div>
<div class="ab" style="left:0;top:273px;width:1100px;height:1px;background:#D4D0C8"></div>
<div class="ab" style="left:0;top:288px;width:1100px;height:1px;background:#D4D0C8"></div>
<div class="ab" style="left:0;top:303px;width:1100px;height:1px;background:#D4D0C8"></div>
<div class="ab" style="left:120px;top:19px;width:1px;height:285px;background:#D4D0C8"></div>
<div class="ab" style="left:145px;top:19px;width:1px;height:285px;background:#D4D0C8"></div>
<div class="ab" style="left:345px;top:19px;width:1px;height:285px;background:#D4D0C8"></div>
<div class="ab" style="left:420px;top:19px;width:1px;height:285px;background:#D4D0C8"></div>
<div class="ab" style="left:455px;top:19px;width:1px;height:285px;background:#D4D0C8"></div>
<div class="ab" style="left:525px;top:19px;width:1px;height:285px;background:#D4D0C8"></div>
<div class="ab" style="left:565px;top:19px;width:1px;height:285px;background:#D4D0C8"></div>
<div class="ab" style="left:600px;top:19px;width:1px;height:285px;background:#D4D0C8"></div>
<div class="ab" style="left:670px;top:19px;width:1px;height:285px;background:#D4D0C8"></div>
<div class="ab" style="left:710px;top:19px;width:1px;height:285px;background:#D4D0C8"></div>
<div class="ab" style="left:735px;top:19px;width:1px;height:285px;background:#D4D0C8"></div>
<div class="ab" style="left:785px;top:19px;width:1px;height:285px;background:#D4D0C8"></div>
<div class="ab" style="left:835px;top:19px;width:1px;height:285px;background:#D4D0C8"></div>
<div class="ab" style="left:890px;top:19px;width:1px;height:285px;background:#D4D0C8"></div>
<div class="ab" style="left:955px;top:19px;width:1px;height:285px;background:#D4D0C8"></div>
<div class="ab" style="left:995px;top:19px;width:1px;height:285px;background:#D4D0C8"></div>
<div class="t" style="left:2px;top:20px;width:118px;overflow:hidden;letter-spacing:-0.5px">DODGE GRAND CAR&hellip;</div>
<div class="t" style="left:82px;width:60.5px;top:20px;text-align:right;letter-spacing:0.45px">7</div>
<div class="t" style="left:148px;top:20px;width:197px;overflow:hidden;letter-spacing:-0.2px">Van(Mini) - Inclusive product</div>
<div class="t" style="left:348px;top:20px;width:72px;overflow:hidden;letter-spacing:-0.2px">Flexible Car&hellip;</div>
<div class="t" style="left:423px;top:20px;width:32px;overflow:hidden;letter-spacing:-0.2px">Sun</div>
<div class="t" style="left:457px;top:20px;width:67px;overflow:hidden;letter-spacing:0.4px">06/08/2017</div>
<div class="t" style="left:527px;top:20px;width:37px;overflow:hidden;letter-spacing:0.4px">12:00</div>
<div class="t" style="left:568px;top:20px;width:32px;overflow:hidden;letter-spacing:-0.2px">Sun</div>
<div class="t" style="left:602px;top:20px;width:67px;overflow:hidden;letter-spacing:0.4px">20/08/2017</div>
<div class="t" style="left:672px;top:20px;width:37px;overflow:hidden;letter-spacing:0.4px">12:00</div>
<div class="t" style="left:672px;width:60.5px;top:20px;text-align:right;letter-spacing:0.45px">14</div>
<div class="t" style="left:738px;top:20px;width:47px;overflow:hidden;letter-spacing:-0.2px">On Air&hellip;</div>
<div class="t" style="left:788px;top:20px;width:47px;overflow:hidden;letter-spacing:-0.2px">On Air&hellip;</div>
<div class="t" style="left:827px;width:60.5px;top:20px;text-align:right;letter-spacing:0.45px">581.67</div>
<div class="t" style="left:892px;width:60.5px;top:20px;text-align:right;letter-spacing:0.45px">581.67</div>
<div class="t" style="left:958px;top:20px;width:37px;overflow:hidden;letter-spacing:-0.2px">Ala</div>
<div class="t" style="left:2px;top:35px;width:118px;overflow:hidden;letter-spacing:-0.5px">DODGE GRAND CAR&hellip;</div>
<div class="t" style="left:82px;width:60.5px;top:35px;text-align:right;letter-spacing:0.45px">7</div>
<div class="t" style="left:148px;top:35px;width:197px;overflow:hidden;letter-spacing:-0.2px">Van(Mini) - Inclusive product</div>
<div class="t" style="left:348px;top:35px;width:72px;overflow:hidden;letter-spacing:-0.2px">Flexible Car&hellip;</div>
<div class="t" style="left:423px;top:35px;width:32px;overflow:hidden;letter-spacing:-0.2px">Sun</div>
<div class="t" style="left:457px;top:35px;width:67px;overflow:hidden;letter-spacing:0.4px">06/08/2017</div>
<div class="t" style="left:527px;top:35px;width:37px;overflow:hidden;letter-spacing:0.4px">12:00</div>
<div class="t" style="left:568px;top:35px;width:32px;overflow:hidden;letter-spacing:-0.2px">Sun</div>
<div class="t" style="left:602px;top:35px;width:67px;overflow:hidden;letter-spacing:0.4px">20/08/2017</div>
<div class="t" style="left:672px;top:35px;width:37px;overflow:hidden;letter-spacing:0.4px">12:00</div>
<div class="t" style="left:672px;width:60.5px;top:35px;text-align:right;letter-spacing:0.45px">14</div>
<div class="t" style="left:738px;top:35px;width:47px;overflow:hidden;letter-spacing:-0.2px">On Air&hellip;</div>
<div class="t" style="left:788px;top:35px;width:47px;overflow:hidden;letter-spacing:-0.2px">On Air&hellip;</div>
<div class="t" style="left:827px;width:60.5px;top:35px;text-align:right;letter-spacing:0.45px">600.36</div>
<div class="t" style="left:892px;width:60.5px;top:35px;text-align:right;letter-spacing:0.45px">600.36</div>
<div class="t" style="left:958px;top:35px;width:37px;overflow:hidden;letter-spacing:-0.2px">Na</div>
<div class="t" style="left:2px;top:50px;width:118px;overflow:hidden;letter-spacing:-0.5px">DODGE GRAND CAR&hellip;</div>
<div class="t" style="left:82px;width:60.5px;top:50px;text-align:right;letter-spacing:0.45px">7</div>
<div class="t" style="left:148px;top:50px;width:197px;overflow:hidden;letter-spacing:-0.2px">Van(Mini) - Inclusive product - Plus Ex&hellip;</div>
<div class="t" style="left:348px;top:50px;width:72px;overflow:hidden;letter-spacing:-0.2px">Flexible Car&hellip;</div>
<div class="t" style="left:423px;top:50px;width:32px;overflow:hidden;letter-spacing:-0.2px">Sun</div>
<div class="t" style="left:457px;top:50px;width:67px;overflow:hidden;letter-spacing:0.4px">06/08/2017</div>
<div class="t" style="left:527px;top:50px;width:37px;overflow:hidden;letter-spacing:0.4px">12:00</div>
<div class="t" style="left:568px;top:50px;width:32px;overflow:hidden;letter-spacing:-0.2px">Sun</div>
<div class="t" style="left:602px;top:50px;width:67px;overflow:hidden;letter-spacing:0.4px">20/08/2017</div>
<div class="t" style="left:672px;top:50px;width:37px;overflow:hidden;letter-spacing:0.4px">12:00</div>
<div class="t" style="left:672px;width:60.5px;top:50px;text-align:right;letter-spacing:0.45px">14</div>
<div class="t" style="left:738px;top:50px;width:47px;overflow:hidden;letter-spacing:-0.2px">On Air&hellip;</div>
<div class="t" style="left:788px;top:50px;width:47px;overflow:hidden;letter-spacing:-0.2px">On Air&hellip;</div>
<div class="t" style="left:827px;width:60.5px;top:50px;text-align:right;letter-spacing:0.45px">618.07</div>
<div class="t" style="left:892px;width:60.5px;top:50px;text-align:right;letter-spacing:0.45px">618.07</div>
<div class="t" style="left:958px;top:50px;width:37px;overflow:hidden;letter-spacing:-0.2px">Ala</div>
<div class="t" style="left:2px;top:65px;width:118px;overflow:hidden;letter-spacing:-0.5px">DODGE GRAND CAR&hellip;</div>
<div class="t" style="left:82px;width:60.5px;top:65px;text-align:right;letter-spacing:0.45px">7</div>
<div class="t" style="left:148px;top:65px;width:197px;overflow:hidden;letter-spacing:-0.2px">Van(Mini) - Inclusive product - Plus Ex&hellip;</div>
<div class="t" style="left:348px;top:65px;width:72px;overflow:hidden;letter-spacing:-0.2px">Flexible Car&hellip;</div>
<div class="t" style="left:423px;top:65px;width:32px;overflow:hidden;letter-spacing:-0.2px">Sun</div>
<div class="t" style="left:457px;top:65px;width:67px;overflow:hidden;letter-spacing:0.4px">06/08/2017</div>
<div class="t" style="left:527px;top:65px;width:37px;overflow:hidden;letter-spacing:0.4px">12:00</div>
<div class="t" style="left:568px;top:65px;width:32px;overflow:hidden;letter-spacing:-0.2px">Sun</div>
<div class="t" style="left:602px;top:65px;width:67px;overflow:hidden;letter-spacing:0.4px">20/08/2017</div>
<div class="t" style="left:672px;top:65px;width:37px;overflow:hidden;letter-spacing:0.4px">12:00</div>
<div class="t" style="left:672px;width:60.5px;top:65px;text-align:right;letter-spacing:0.45px">14</div>
<div class="t" style="left:738px;top:65px;width:47px;overflow:hidden;letter-spacing:-0.2px">On Air&hellip;</div>
<div class="t" style="left:788px;top:65px;width:47px;overflow:hidden;letter-spacing:-0.2px">On Air&hellip;</div>
<div class="t" style="left:827px;width:60.5px;top:65px;text-align:right;letter-spacing:0.45px">636.76</div>
<div class="t" style="left:892px;width:60.5px;top:65px;text-align:right;letter-spacing:0.45px">636.76</div>
<div class="t" style="left:958px;top:65px;width:37px;overflow:hidden;letter-spacing:-0.2px">Na</div>
<div class="t" style="left:2px;top:80px;width:118px;overflow:hidden;letter-spacing:-0.5px">DODGE GRAND CAR&hellip;</div>
<div class="t" style="left:82px;width:60.5px;top:80px;text-align:right;letter-spacing:0.45px">7</div>
<div class="t" style="left:148px;top:80px;width:197px;overflow:hidden;letter-spacing:-0.2px">Van(Mini) - Gold</div>
<div class="t" style="left:348px;top:80px;width:72px;overflow:hidden;letter-spacing:-0.2px">Flexible Car&hellip;</div>
<div class="t" style="left:423px;top:80px;width:32px;overflow:hidden;letter-spacing:-0.2px">Sun</div>
<div class="t" style="left:457px;top:80px;width:67px;overflow:hidden;letter-spacing:0.4px">06/08/2017</div>
<div class="t" style="left:527px;top:80px;width:37px;overflow:hidden;letter-spacing:0.4px">12:00</div>
<div class="t" style="left:568px;top:80px;width:32px;overflow:hidden;letter-spacing:-0.2px">Sun</div>
<div class="t" style="left:602px;top:80px;width:67px;overflow:hidden;letter-spacing:0.4px">20/08/2017</div>
<div class="t" style="left:672px;top:80px;width:37px;overflow:hidden;letter-spacing:0.4px">12:00</div>
<div class="t" style="left:672px;width:60.5px;top:80px;text-align:right;letter-spacing:0.45px">14</div>
<div class="t" style="left:738px;top:80px;width:47px;overflow:hidden;letter-spacing:-0.2px">On Air&hellip;</div>
<div class="t" style="left:788px;top:80px;width:47px;overflow:hidden;letter-spacing:-0.2px">On Air&hellip;</div>
<div class="t" style="left:827px;width:60.5px;top:80px;text-align:right;letter-spacing:0.45px">638.87</div>
<div class="t" style="left:892px;width:60.5px;top:80px;text-align:right;letter-spacing:0.45px">638.87</div>
<div class="t" style="left:958px;top:80px;width:37px;overflow:hidden;letter-spacing:-0.2px">Ala</div>
<div class="t" style="left:2px;top:95px;width:118px;overflow:hidden;letter-spacing:-0.5px">DODGE GRAND CAR&hellip;</div>
<div class="t" style="left:82px;width:60.5px;top:95px;text-align:right;letter-spacing:0.45px">7</div>
<div class="t" style="left:148px;top:95px;width:197px;overflow:hidden;letter-spacing:-0.2px">Van(Mini) - Gold</div>
<div class="t" style="left:348px;top:95px;width:72px;overflow:hidden;letter-spacing:-0.2px">Flexible Car&hellip;</div>
<div class="t" style="left:423px;top:95px;width:32px;overflow:hidden;letter-spacing:-0.2px">Sun</div>
<div class="t" style="left:457px;top:95px;width:67px;overflow:hidden;letter-spacing:0.4px">06/08/2017</div>
<div class="t" style="left:527px;top:95px;width:37px;overflow:hidden;letter-spacing:0.4px">12:00</div>
<div class="t" style="left:568px;top:95px;width:32px;overflow:hidden;letter-spacing:-0.2px">Sun</div>
<div class="t" style="left:602px;top:95px;width:67px;overflow:hidden;letter-spacing:0.4px">20/08/2017</div>
<div class="t" style="left:672px;top:95px;width:37px;overflow:hidden;letter-spacing:0.4px">12:00</div>
<div class="t" style="left:672px;width:60.5px;top:95px;text-align:right;letter-spacing:0.45px">14</div>
<div class="t" style="left:738px;top:95px;width:47px;overflow:hidden;letter-spacing:-0.2px">On Air&hellip;</div>
<div class="t" style="left:788px;top:95px;width:47px;overflow:hidden;letter-spacing:-0.2px">On Air&hellip;</div>
<div class="t" style="left:827px;width:60.5px;top:95px;text-align:right;letter-spacing:0.45px">662.72</div>
<div class="t" style="left:892px;width:60.5px;top:95px;text-align:right;letter-spacing:0.45px">662.72</div>
<div class="t" style="left:958px;top:95px;width:37px;overflow:hidden;letter-spacing:-0.2px">Na</div>
<div class="t" style="left:2px;top:110px;width:118px;overflow:hidden;letter-spacing:-0.5px">DODGE GRAND CAR&hellip;</div>
<div class="t" style="left:82px;width:60.5px;top:110px;text-align:right;letter-spacing:0.45px">7</div>
<div class="t" style="left:148px;top:110px;width:197px;overflow:hidden;letter-spacing:-0.2px">Van(Mini) - Gold - Plus Excess Refund</div>
<div class="t" style="left:348px;top:110px;width:72px;overflow:hidden;letter-spacing:-0.2px">Flexible Car&hellip;</div>
<div class="t" style="left:423px;top:110px;width:32px;overflow:hidden;letter-spacing:-0.2px">Sun</div>
<div class="t" style="left:457px;top:110px;width:67px;overflow:hidden;letter-spacing:0.4px">06/08/2017</div>
<div class="t" style="left:527px;top:110px;width:37px;overflow:hidden;letter-spacing:0.4px">12:00</div>
<div class="t" style="left:568px;top:110px;width:32px;overflow:hidden;letter-spacing:-0.2px">Sun</div>
<div class="t" style="left:602px;top:110px;width:67px;overflow:hidden;letter-spacing:0.4px">20/08/2017</div>
<div class="t" style="left:672px;top:110px;width:37px;overflow:hidden;letter-spacing:0.4px">12:00</div>
<div class="t" style="left:672px;width:60.5px;top:110px;text-align:right;letter-spacing:0.45px">14</div>
<div class="t" style="left:738px;top:110px;width:47px;overflow:hidden;letter-spacing:-0.2px">On Air&hellip;</div>
<div class="t" style="left:788px;top:110px;width:47px;overflow:hidden;letter-spacing:-0.2px">On Air&hellip;</div>
<div class="t" style="left:827px;width:60.5px;top:110px;text-align:right;letter-spacing:0.45px">675.27</div>
<div class="t" style="left:892px;width:60.5px;top:110px;text-align:right;letter-spacing:0.45px">675.27</div>
<div class="t" style="left:958px;top:110px;width:37px;overflow:hidden;letter-spacing:-0.2px">Ala</div>
<div class="t" style="left:2px;top:125px;width:118px;overflow:hidden;letter-spacing:-0.5px">DODGE GRAND CAR&hellip;</div>
<div class="t" style="left:82px;width:60.5px;top:125px;text-align:right;letter-spacing:0.45px">7</div>
<div class="t" style="left:148px;top:125px;width:197px;overflow:hidden;letter-spacing:-0.2px">Van(Mini) - Inclusive GPS</div>
<div class="t" style="left:348px;top:125px;width:72px;overflow:hidden;letter-spacing:-0.2px">Flexible Car&hellip;</div>
<div class="t" style="left:423px;top:125px;width:32px;overflow:hidden;letter-spacing:-0.2px">Sun</div>
<div class="t" style="left:457px;top:125px;width:67px;overflow:hidden;letter-spacing:0.4px">06/08/2017</div>
<div class="t" style="left:527px;top:125px;width:37px;overflow:hidden;letter-spacing:0.4px">12:00</div>
<div class="t" style="left:568px;top:125px;width:32px;overflow:hidden;letter-spacing:-0.2px">Sun</div>
<div class="t" style="left:602px;top:125px;width:67px;overflow:hidden;letter-spacing:0.4px">20/08/2017</div>
<div class="t" style="left:672px;top:125px;width:37px;overflow:hidden;letter-spacing:0.4px">12:00</div>
<div class="t" style="left:672px;width:60.5px;top:125px;text-align:right;letter-spacing:0.45px">14</div>
<div class="t" style="left:738px;top:125px;width:47px;overflow:hidden;letter-spacing:-0.2px">On Air&hellip;</div>
<div class="t" style="left:788px;top:125px;width:47px;overflow:hidden;letter-spacing:-0.2px">On Air&hellip;</div>
<div class="t" style="left:827px;width:60.5px;top:125px;text-align:right;letter-spacing:0.45px">679.46</div>
<div class="t" style="left:892px;width:60.5px;top:125px;text-align:right;letter-spacing:0.45px">679.46</div>
<div class="t" style="left:958px;top:125px;width:37px;overflow:hidden;letter-spacing:-0.2px">Ala</div>
<div class="t" style="left:2px;top:140px;width:118px;overflow:hidden;letter-spacing:-0.5px">DODGE GRAND CAR&hellip;</div>
<div class="t" style="left:82px;width:60.5px;top:140px;text-align:right;letter-spacing:0.45px">7</div>
<div class="t" style="left:148px;top:140px;width:197px;overflow:hidden;letter-spacing:-0.2px">Van(Mini) - Inclusive GPS</div>
<div class="t" style="left:348px;top:140px;width:72px;overflow:hidden;letter-spacing:-0.2px">Flexible Car&hellip;</div>
<div class="t" style="left:423px;top:140px;width:32px;overflow:hidden;letter-spacing:-0.2px">Sun</div>
<div class="t" style="left:457px;top:140px;width:67px;overflow:hidden;letter-spacing:0.4px">06/08/2017</div>
<div class="t" style="left:527px;top:140px;width:37px;overflow:hidden;letter-spacing:0.4px">12:00</div>
<div class="t" style="left:568px;top:140px;width:32px;overflow:hidden;letter-spacing:-0.2px">Sun</div>
<div class="t" style="left:602px;top:140px;width:67px;overflow:hidden;letter-spacing:0.4px">20/08/2017</div>
<div class="t" style="left:672px;top:140px;width:37px;overflow:hidden;letter-spacing:0.4px">12:00</div>
<div class="t" style="left:672px;width:60.5px;top:140px;text-align:right;letter-spacing:0.45px">14</div>
<div class="t" style="left:738px;top:140px;width:47px;overflow:hidden;letter-spacing:-0.2px">On Air&hellip;</div>
<div class="t" style="left:788px;top:140px;width:47px;overflow:hidden;letter-spacing:-0.2px">On Air&hellip;</div>
<div class="t" style="left:827px;width:60.5px;top:140px;text-align:right;letter-spacing:0.45px">691.99</div>
<div class="t" style="left:892px;width:60.5px;top:140px;text-align:right;letter-spacing:0.45px">691.99</div>
<div class="t" style="left:958px;top:140px;width:37px;overflow:hidden;letter-spacing:-0.2px">Na</div>
<div class="t" style="left:2px;top:155px;width:118px;overflow:hidden;letter-spacing:-0.5px">DODGE GRAND CAR&hellip;</div>
<div class="t" style="left:82px;width:60.5px;top:155px;text-align:right;letter-spacing:0.45px">7</div>
<div class="t" style="left:148px;top:155px;width:197px;overflow:hidden;letter-spacing:-0.2px">Van(Mini) - Gold - Plus Excess Refund</div>
<div class="t" style="left:348px;top:155px;width:72px;overflow:hidden;letter-spacing:-0.2px">Flexible Car&hellip;</div>
<div class="t" style="left:423px;top:155px;width:32px;overflow:hidden;letter-spacing:-0.2px">Sun</div>
<div class="t" style="left:457px;top:155px;width:67px;overflow:hidden;letter-spacing:0.4px">06/08/2017</div>
<div class="t" style="left:527px;top:155px;width:37px;overflow:hidden;letter-spacing:0.4px">12:00</div>
<div class="t" style="left:568px;top:155px;width:32px;overflow:hidden;letter-spacing:-0.2px">Sun</div>
<div class="t" style="left:602px;top:155px;width:67px;overflow:hidden;letter-spacing:0.4px">20/08/2017</div>
<div class="t" style="left:672px;top:155px;width:37px;overflow:hidden;letter-spacing:0.4px">12:00</div>
<div class="t" style="left:672px;width:60.5px;top:155px;text-align:right;letter-spacing:0.45px">14</div>
<div class="t" style="left:738px;top:155px;width:47px;overflow:hidden;letter-spacing:-0.2px">On Air&hellip;</div>
<div class="t" style="left:788px;top:155px;width:47px;overflow:hidden;letter-spacing:-0.2px">On Air&hellip;</div>
<div class="t" style="left:827px;width:60.5px;top:155px;text-align:right;letter-spacing:0.45px">699.12</div>
<div class="t" style="left:892px;width:60.5px;top:155px;text-align:right;letter-spacing:0.45px">699.12</div>
<div class="t" style="left:958px;top:155px;width:37px;overflow:hidden;letter-spacing:-0.2px">Na</div>
<div class="t" style="left:2px;top:170px;width:118px;overflow:hidden;letter-spacing:-0.5px">CHEVROLET TAHOE &hellip;</div>
<div class="t" style="left:82px;width:60.5px;top:170px;text-align:right;letter-spacing:0.45px">7</div>
<div class="t" style="left:148px;top:170px;width:197px;overflow:hidden;letter-spacing:-0.2px">SUV(Full Size) - Inclusive product</div>
<div class="t" style="left:348px;top:170px;width:72px;overflow:hidden;letter-spacing:-0.2px">Flexible Car&hellip;</div>
<div class="t" style="left:423px;top:170px;width:32px;overflow:hidden;letter-spacing:-0.2px">Sun</div>
<div class="t" style="left:457px;top:170px;width:67px;overflow:hidden;letter-spacing:0.4px">06/08/2017</div>
<div class="t" style="left:527px;top:170px;width:37px;overflow:hidden;letter-spacing:0.4px">12:00</div>
<div class="t" style="left:568px;top:170px;width:32px;overflow:hidden;letter-spacing:-0.2px">Sun</div>
<div class="t" style="left:602px;top:170px;width:67px;overflow:hidden;letter-spacing:0.4px">20/08/2017</div>
<div class="t" style="left:672px;top:170px;width:37px;overflow:hidden;letter-spacing:0.4px">12:00</div>
<div class="t" style="left:672px;width:60.5px;top:170px;text-align:right;letter-spacing:0.45px">14</div>
<div class="t" style="left:738px;top:170px;width:47px;overflow:hidden;letter-spacing:-0.2px">On Air&hellip;</div>
<div class="t" style="left:788px;top:170px;width:47px;overflow:hidden;letter-spacing:-0.2px">On Air&hellip;</div>
<div class="t" style="left:827px;width:60.5px;top:170px;text-align:right;letter-spacing:0.45px">708.97</div>
<div class="t" style="left:892px;width:60.5px;top:170px;text-align:right;letter-spacing:0.45px">708.97</div>
<div class="t" style="left:958px;top:170px;width:37px;overflow:hidden;letter-spacing:-0.2px">Ala</div>
<div class="t" style="left:2px;top:185px;width:118px;overflow:hidden;letter-spacing:-0.5px">DODGE GRAND CAR&hellip;</div>
<div class="t" style="left:82px;width:60.5px;top:185px;text-align:right;letter-spacing:0.45px">7</div>
<div class="t" style="left:148px;top:185px;width:197px;overflow:hidden;letter-spacing:-0.2px">Van(Mini) - Inclusive GPS - Plus Exces&hellip;</div>
<div class="t" style="left:348px;top:185px;width:72px;overflow:hidden;letter-spacing:-0.2px">Flexible Car&hellip;</div>
<div class="t" style="left:423px;top:185px;width:32px;overflow:hidden;letter-spacing:-0.2px">Sun</div>
<div class="t" style="left:457px;top:185px;width:67px;overflow:hidden;letter-spacing:0.4px">06/08/2017</div>
<div class="t" style="left:527px;top:185px;width:37px;overflow:hidden;letter-spacing:0.4px">12:00</div>
<div class="t" style="left:568px;top:185px;width:32px;overflow:hidden;letter-spacing:-0.2px">Sun</div>
<div class="t" style="left:602px;top:185px;width:67px;overflow:hidden;letter-spacing:0.4px">20/08/2017</div>
<div class="t" style="left:672px;top:185px;width:37px;overflow:hidden;letter-spacing:0.4px">12:00</div>
<div class="t" style="left:672px;width:60.5px;top:185px;text-align:right;letter-spacing:0.45px">14</div>
<div class="t" style="left:738px;top:185px;width:47px;overflow:hidden;letter-spacing:-0.2px">On Air&hellip;</div>
<div class="t" style="left:788px;top:185px;width:47px;overflow:hidden;letter-spacing:-0.2px">On Air&hellip;</div>
<div class="t" style="left:827px;width:60.5px;top:185px;text-align:right;letter-spacing:0.45px">715.86</div>
<div class="t" style="left:892px;width:60.5px;top:185px;text-align:right;letter-spacing:0.45px">715.86</div>
<div class="t" style="left:958px;top:185px;width:37px;overflow:hidden;letter-spacing:-0.2px">Ala</div>
<div class="t" style="left:2px;top:200px;width:118px;overflow:hidden;letter-spacing:-0.5px">DODGE GRAND CAR&hellip;</div>
<div class="t" style="left:82px;width:60.5px;top:200px;text-align:right;letter-spacing:0.45px">7</div>
<div class="t" style="left:148px;top:200px;width:197px;overflow:hidden;letter-spacing:-0.2px">Van(Mini) - Inclusive GPS - Plus Exces&hellip;</div>
<div class="t" style="left:348px;top:200px;width:72px;overflow:hidden;letter-spacing:-0.2px">Flexible Car&hellip;</div>
<div class="t" style="left:423px;top:200px;width:32px;overflow:hidden;letter-spacing:-0.2px">Sun</div>
<div class="t" style="left:457px;top:200px;width:67px;overflow:hidden;letter-spacing:0.4px">06/08/2017</div>
<div class="t" style="left:527px;top:200px;width:37px;overflow:hidden;letter-spacing:0.4px">12:00</div>
<div class="t" style="left:568px;top:200px;width:32px;overflow:hidden;letter-spacing:-0.2px">Sun</div>
<div class="t" style="left:602px;top:200px;width:67px;overflow:hidden;letter-spacing:0.4px">20/08/2017</div>
<div class="t" style="left:672px;top:200px;width:37px;overflow:hidden;letter-spacing:0.4px">12:00</div>
<div class="t" style="left:672px;width:60.5px;top:200px;text-align:right;letter-spacing:0.45px">14</div>
<div class="t" style="left:738px;top:200px;width:47px;overflow:hidden;letter-spacing:-0.2px">On Air&hellip;</div>
<div class="t" style="left:788px;top:200px;width:47px;overflow:hidden;letter-spacing:-0.2px">On Air&hellip;</div>
<div class="t" style="left:827px;width:60.5px;top:200px;text-align:right;letter-spacing:0.45px">728.39</div>
<div class="t" style="left:892px;width:60.5px;top:200px;text-align:right;letter-spacing:0.45px">728.39</div>
<div class="t" style="left:958px;top:200px;width:37px;overflow:hidden;letter-spacing:-0.2px">Na</div>
<div class="t" style="left:2px;top:215px;width:118px;overflow:hidden;letter-spacing:-0.5px">DODGE GRAND CAR&hellip;</div>
<div class="t" style="left:82px;width:60.5px;top:215px;text-align:right;letter-spacing:0.45px">7</div>
<div class="t" style="left:148px;top:215px;width:197px;overflow:hidden;letter-spacing:-0.2px">Van(Mini) - Gold GPS</div>
<div class="t" style="left:348px;top:215px;width:72px;overflow:hidden;letter-spacing:-0.2px">Flexible Car&hellip;</div>
<div class="t" style="left:423px;top:215px;width:32px;overflow:hidden;letter-spacing:-0.2px">Sun</div>
<div class="t" style="left:457px;top:215px;width:67px;overflow:hidden;letter-spacing:0.4px">06/08/2017</div>
<div class="t" style="left:527px;top:215px;width:37px;overflow:hidden;letter-spacing:0.4px">12:00</div>
<div class="t" style="left:568px;top:215px;width:32px;overflow:hidden;letter-spacing:-0.2px">Sun</div>
<div class="t" style="left:602px;top:215px;width:67px;overflow:hidden;letter-spacing:0.4px">20/08/2017</div>
<div class="t" style="left:672px;top:215px;width:37px;overflow:hidden;letter-spacing:0.4px">12:00</div>
<div class="t" style="left:672px;width:60.5px;top:215px;text-align:right;letter-spacing:0.45px">14</div>
<div class="t" style="left:738px;top:215px;width:47px;overflow:hidden;letter-spacing:-0.2px">On Air&hellip;</div>
<div class="t" style="left:788px;top:215px;width:47px;overflow:hidden;letter-spacing:-0.2px">On Air&hellip;</div>
<div class="t" style="left:827px;width:60.5px;top:215px;text-align:right;letter-spacing:0.45px">732.96</div>
<div class="t" style="left:892px;width:60.5px;top:215px;text-align:right;letter-spacing:0.45px">732.96</div>
<div class="t" style="left:958px;top:215px;width:37px;overflow:hidden;letter-spacing:-0.2px">Ala</div>
<div class="t" style="left:2px;top:230px;width:118px;overflow:hidden;letter-spacing:-0.5px">CHEVROLET TAHOE &hellip;</div>
<div class="t" style="left:82px;width:60.5px;top:230px;text-align:right;letter-spacing:0.45px">7</div>
<div class="t" style="left:148px;top:230px;width:197px;overflow:hidden;letter-spacing:-0.2px">SUV(Full Size) - Inclusive product - Plu&hellip;</div>
<div class="t" style="left:348px;top:230px;width:72px;overflow:hidden;letter-spacing:-0.2px">Flexible Car&hellip;</div>
<div class="t" style="left:423px;top:230px;width:32px;overflow:hidden;letter-spacing:-0.2px">Sun</div>
<div class="t" style="left:457px;top:230px;width:67px;overflow:hidden;letter-spacing:0.4px">06/08/2017</div>
<div class="t" style="left:527px;top:230px;width:37px;overflow:hidden;letter-spacing:0.4px">12:00</div>
<div class="t" style="left:568px;top:230px;width:32px;overflow:hidden;letter-spacing:-0.2px">Sun</div>
<div class="t" style="left:602px;top:230px;width:67px;overflow:hidden;letter-spacing:0.4px">20/08/2017</div>
<div class="t" style="left:672px;top:230px;width:37px;overflow:hidden;letter-spacing:0.4px">12:00</div>
<div class="t" style="left:672px;width:60.5px;top:230px;text-align:right;letter-spacing:0.45px">14</div>
<div class="t" style="left:738px;top:230px;width:47px;overflow:hidden;letter-spacing:-0.2px">On Air&hellip;</div>
<div class="t" style="left:788px;top:230px;width:47px;overflow:hidden;letter-spacing:-0.2px">On Air&hellip;</div>
<div class="t" style="left:827px;width:60.5px;top:230px;text-align:right;letter-spacing:0.45px">745.37</div>
<div class="t" style="left:892px;width:60.5px;top:230px;text-align:right;letter-spacing:0.45px">745.37</div>
<div class="t" style="left:958px;top:230px;width:37px;overflow:hidden;letter-spacing:-0.2px">Ala</div>
<div class="t" style="left:2px;top:245px;width:118px;overflow:hidden;letter-spacing:-0.5px">CHEVROLET TAHOE &hellip;</div>
<div class="t" style="left:82px;width:60.5px;top:245px;text-align:right;letter-spacing:0.45px">7</div>
<div class="t" style="left:148px;top:245px;width:197px;overflow:hidden;letter-spacing:-0.2px">SUV(Full Size) - Gold</div>
<div class="t" style="left:348px;top:245px;width:72px;overflow:hidden;letter-spacing:-0.2px">Flexible Car&hellip;</div>
<div class="t" style="left:423px;top:245px;width:32px;overflow:hidden;letter-spacing:-0.2px">Sun</div>
<div class="t" style="left:457px;top:245px;width:67px;overflow:hidden;letter-spacing:0.4px">06/08/2017</div>
<div class="t" style="left:527px;top:245px;width:37px;overflow:hidden;letter-spacing:0.4px">12:00</div>
<div class="t" style="left:568px;top:245px;width:32px;overflow:hidden;letter-spacing:-0.2px">Sun</div>
<div class="t" style="left:602px;top:245px;width:67px;overflow:hidden;letter-spacing:0.4px">20/08/2017</div>
<div class="t" style="left:672px;top:245px;width:37px;overflow:hidden;letter-spacing:0.4px">12:00</div>
<div class="t" style="left:672px;width:60.5px;top:245px;text-align:right;letter-spacing:0.45px">14</div>
<div class="t" style="left:738px;top:245px;width:47px;overflow:hidden;letter-spacing:-0.2px">On Air&hellip;</div>
<div class="t" style="left:788px;top:245px;width:47px;overflow:hidden;letter-spacing:-0.2px">On Air&hellip;</div>
<div class="t" style="left:827px;width:60.5px;top:245px;text-align:right;letter-spacing:0.45px">749.57</div>
<div class="t" style="left:892px;width:60.5px;top:245px;text-align:right;letter-spacing:0.45px">749.57</div>
<div class="t" style="left:958px;top:245px;width:37px;overflow:hidden;letter-spacing:-0.2px">Ala</div>
<div class="t" style="left:2px;top:260px;width:118px;overflow:hidden;letter-spacing:-0.5px">DODGE GRAND CAR&hellip;</div>
<div class="t" style="left:82px;width:60.5px;top:260px;text-align:right;letter-spacing:0.45px">7</div>
<div class="t" style="left:148px;top:260px;width:197px;overflow:hidden;letter-spacing:-0.2px">Van(Mini) - Gold GPS</div>
<div class="t" style="left:348px;top:260px;width:72px;overflow:hidden;letter-spacing:-0.2px">Flexible Car&hellip;</div>
<div class="t" style="left:423px;top:260px;width:32px;overflow:hidden;letter-spacing:-0.2px">Sun</div>
<div class="t" style="left:457px;top:260px;width:67px;overflow:hidden;letter-spacing:0.4px">06/08/2017</div>
<div class="t" style="left:527px;top:260px;width:37px;overflow:hidden;letter-spacing:0.4px">12:00</div>
<div class="t" style="left:568px;top:260px;width:32px;overflow:hidden;letter-spacing:-0.2px">Sun</div>
<div class="t" style="left:602px;top:260px;width:67px;overflow:hidden;letter-spacing:0.4px">20/08/2017</div>
<div class="t" style="left:672px;top:260px;width:37px;overflow:hidden;letter-spacing:0.4px">12:00</div>
<div class="t" style="left:672px;width:60.5px;top:260px;text-align:right;letter-spacing:0.45px">14</div>
<div class="t" style="left:738px;top:260px;width:47px;overflow:hidden;letter-spacing:-0.2px">On Air&hellip;</div>
<div class="t" style="left:788px;top:260px;width:47px;overflow:hidden;letter-spacing:-0.2px">On Air&hellip;</div>
<div class="t" style="left:827px;width:60.5px;top:260px;text-align:right;letter-spacing:0.45px">754.36</div>
<div class="t" style="left:892px;width:60.5px;top:260px;text-align:right;letter-spacing:0.45px">754.36</div>
<div class="t" style="left:958px;top:260px;width:37px;overflow:hidden;letter-spacing:-0.2px">Na</div>
<div class="t" style="left:2px;top:275px;width:118px;overflow:hidden;letter-spacing:-0.5px">DODGE GRAND CAR&hellip;</div>
<div class="t" style="left:82px;width:60.5px;top:275px;text-align:right;letter-spacing:0.45px">7</div>
<div class="t" style="left:148px;top:275px;width:197px;overflow:hidden;letter-spacing:-0.2px">Van(Mini) - Gold GPS - Plus Excess Ref&hellip;</div>
<div class="t" style="left:348px;top:275px;width:72px;overflow:hidden;letter-spacing:-0.2px">Flexible Car&hellip;</div>
<div class="t" style="left:423px;top:275px;width:32px;overflow:hidden;letter-spacing:-0.2px">Sun</div>
<div class="t" style="left:457px;top:275px;width:67px;overflow:hidden;letter-spacing:0.4px">06/08/2017</div>
<div class="t" style="left:527px;top:275px;width:37px;overflow:hidden;letter-spacing:0.4px">12:00</div>
<div class="t" style="left:568px;top:275px;width:32px;overflow:hidden;letter-spacing:-0.2px">Sun</div>
<div class="t" style="left:602px;top:275px;width:67px;overflow:hidden;letter-spacing:0.4px">20/08/2017</div>
<div class="t" style="left:672px;top:275px;width:37px;overflow:hidden;letter-spacing:0.4px">12:00</div>
<div class="t" style="left:672px;width:60.5px;top:275px;text-align:right;letter-spacing:0.45px">14</div>
<div class="t" style="left:738px;top:275px;width:47px;overflow:hidden;letter-spacing:-0.2px">On Air&hellip;</div>
<div class="t" style="left:788px;top:275px;width:47px;overflow:hidden;letter-spacing:-0.2px">On Air&hellip;</div>
<div class="t" style="left:827px;width:60.5px;top:275px;text-align:right;letter-spacing:0.45px">769.36</div>
<div class="t" style="left:892px;width:60.5px;top:275px;text-align:right;letter-spacing:0.45px">769.36</div>
<div class="t" style="left:958px;top:275px;width:37px;overflow:hidden;letter-spacing:-0.2px">Ala</div>
<div class="t" style="left:2px;top:290px;width:118px;overflow:hidden;letter-spacing:-0.5px">CHEVROLET TAHOE &hellip;</div>
<div class="t" style="left:82px;width:60.5px;top:290px;text-align:right;letter-spacing:0.45px">7</div>
<div class="t" style="left:148px;top:290px;width:197px;overflow:hidden;letter-spacing:-0.2px">SUV(Full Size) - Gold - Plus Excess Ref&hellip;</div>
<div class="t" style="left:348px;top:290px;width:72px;overflow:hidden;letter-spacing:-0.2px">Flexible Car&hellip;</div>
<div class="t" style="left:423px;top:290px;width:32px;overflow:hidden;letter-spacing:-0.2px">Sun</div>
<div class="t" style="left:457px;top:290px;width:67px;overflow:hidden;letter-spacing:0.4px">06/08/2017</div>
<div class="t" style="left:527px;top:290px;width:37px;overflow:hidden;letter-spacing:0.4px">12:00</div>
<div class="t" style="left:568px;top:290px;width:32px;overflow:hidden;letter-spacing:-0.2px">Sun</div>
<div class="t" style="left:602px;top:290px;width:67px;overflow:hidden;letter-spacing:0.4px">20/08/2017</div>
<div class="t" style="left:672px;top:290px;width:37px;overflow:hidden;letter-spacing:0.4px">12:00</div>
<div class="t" style="left:672px;width:60.5px;top:290px;text-align:right;letter-spacing:0.45px">14</div>
<div class="t" style="left:738px;top:290px;width:47px;overflow:hidden;letter-spacing:-0.2px">On Air&hellip;</div>
<div class="t" style="left:788px;top:290px;width:47px;overflow:hidden;letter-spacing:-0.2px">On Air&hellip;</div>
<div class="t" style="left:827px;width:60.5px;top:290px;text-align:right;letter-spacing:0.45px">785.97</div>
<div class="t" style="left:892px;width:60.5px;top:290px;text-align:right;letter-spacing:0.45px">785.97</div>
<div class="t" style="left:958px;top:290px;width:37px;overflow:hidden;letter-spacing:-0.2px">Ala</div>
</div>
<div class="ab chk" style="left:1186px;top:375px;width:16px;height:304px"></div>
<div class="rais" style="left:1186px;top:375px;width:16px;height:16px"></div>
<svg style="left:1190px;top:380px" width="8" height="5"><path d="M0,4 L7,4 L3.5,0Z" fill="#000"/></svg>
<div class="rais" style="left:1186px;top:391px;width:16px;height:75px"></div>
<div class="rais" style="left:1186px;top:663px;width:16px;height:16px"></div>
<svg style="left:1190px;top:668px" width="8" height="5"><path d="M0,0 L7,0 L3.5,4Z" fill="#000"/></svg>
<div class="ab chk" style="left:216px;top:679px;width:970px;height:16px"></div>
<div class="rais" style="left:216px;top:679px;width:16px;height:16px"></div>
<svg style="left:221px;top:683px" width="5" height="8"><path d="M4,0 L4,7 L0,3.5Z" fill="#000"/></svg>
<div class="rais" style="left:232px;top:679px;width:790px;height:16px"></div>
<div class="rais" style="left:1170px;top:679px;width:16px;height:16px"></div>
<svg style="left:1176px;top:683px" width="5" height="8"><path d="M0,0 L0,7 L4,3.5Z" fill="#000"/></svg>
<div class="ab" style="left:1186px;top:679px;width:16px;height:16px;background:#D4D0C8"></div>
<div class="t" style="left:219px;top:722px;font-size:11px;">First portion: 10.1 sec, total search time: 13.5 sec</div>
<div class="rais" style="left:1173px;top:717px;width:24px;height:23px"></div>
<svg style="left:1180px;top:721px" width="10" height="15"><circle cx="4" cy="1.8" r="1.7" fill="#0A4AA8"/><path d="M1,5 L5.5,5 L5.5,10.5 L7,10.5 L7,12.5 L1,12.5 L1,10.5 L2.5,10.5 L2.5,7 L1,7Z" fill="#0A4AA8"/></svg>
<div class="ab" style="left:212px;top:744px;width:994px;height:1px;background:#808080"></div>
<div class="ab" style="left:212px;top:745px;width:53px;height:17px;background:#D4D0C8;border-right:1px solid #909090"></div>
<div class="ab" style="left:265px;top:745px;width:41px;height:17px;background:#D4D0C8;border-right:1px solid #909090"></div>
<div class="ab" style="left:306px;top:745px;width:108px;height:17px;background:#CCFFCC;border-right:1px solid #909090"></div>
<div class="ab" style="left:414px;top:745px;width:67px;height:17px;background:#CCFFCC;border-right:1px solid #909090"></div>
<div class="ab" style="left:481px;top:745px;width:50px;height:18px;background:#008000;border-radius:0 0 3px 3px;border-right:1px solid #909090"></div>
<div class="ab" style="left:531px;top:745px;width:46px;height:17px;background:#CCFFCC;border-right:1px solid #909090"></div>
<div class="ab" style="left:577px;top:745px;width:96px;height:17px;background:#D4D0C8;border-right:1px solid #909090"></div>
<div class="t" style="left:215px;top:747px;width:47px;text-align:center;color:#000;letter-spacing:-0.35px">Summary</div>
<div class="t" style="left:268px;top:747px;width:35px;text-align:center;color:#000;letter-spacing:-0.35px">Search</div>
<div class="t" style="left:309px;top:747px;width:102px;text-align:center;color:#000;letter-spacing:-0.35px">Flt 2A LON MCO LON</div>
<div class="t" style="left:417px;top:747px;width:61px;text-align:center;color:#000;letter-spacing:-0.35px">Acc 2A MCO</div>
<div class="t" style="left:484px;top:747px;width:44px;text-align:center;color:#fff;letter-spacing:-0.35px">Car MCO</div>
<div class="t" style="left:534px;top:747px;width:40px;text-align:center;color:#000;letter-spacing:-0.35px">Tour 2A</div>
<div class="t" style="left:580px;top:747px;width:90px;text-align:center;color:#000;letter-spacing:-0.35px">Financial Summary</div>
<div class="t" style="left:538px;top:771px;font-size:11px;letter-spacing:-0.15px">User: 428 - Danny Eden</div>
<div class="t" style="left:665px;top:771px;font-size:11px;letter-spacing:-0.15px">Retailer: 'Ocean-Florida'</div>
<div class="t" style="left:790px;top:771px;font-size:11px;letter-spacing:-0.1px">Client: none</div>
<div class="t" style="right:152px;top:771px;font-size:11px;text-align:right;letter-spacing:-0.3px">18:31 GMT</div>
<div class="ab" style="left:0px;top:787px;width:1356px;height:18px;background:#EAEAEA"></div>
<div class="ab" style="left:0px;top:787px;width:1356px;height:1px;background:#fff"></div>
<div class="ab" style="left:0px;top:788px;width:1356px;height:1px;background:#8A8A8A"></div>
<div class="ab" style="left:0px;top:789px;width:1308px;height:13px;background:linear-gradient(#F2F2F2,#E8E8E8 45%,#D2D4D8 55%,#C8CACE);border-right:1px solid #909090;border-radius:0 2px 2px 0"></div>
<div class="ab" style="left:0px;top:802px;width:1308px;height:1px;background:#909090"></div>
<div class="ab" style="left:0px;top:803px;width:1356px;height:1px;background:#B0B0B0"></div>
<div class="ab" style="left:1308px;top:789px;width:48px;height:14px;background:#EDEDED"></div>
<div class="ab" style="left:636px;top:791px;width:7px;height:8px;border-left:1px solid #444;border-right:1px solid #444"><div style="margin-left:2px;width:1px;height:8px;background:#444"></div></div>
<svg style="left:1349px;top:791px" width="5" height="9"><path d="M0,0 L4,4.5 L0,9Z" fill="#222"/></svg>
<div class="ab" style="left:0px;top:804px;width:1356px;height:7px;background:linear-gradient(90deg,#C8EEF8,#B8DCF4 20%,#D8F8FC 50%,#B0D8F0 70%,#D8F8FC)"></div>
<div class="ab" style="left:0px;top:810px;width:1356px;height:2px;background:#1A2A38"></div>
<div class="ab" style="left:0px;top:812px;width:1356px;height:23px;background:linear-gradient(90deg,#34485A 0,#2A3A48 440px,#1E2A35 520px,#28353F 690px,#1F2B36 850px,#2C3A48 970px,#232F3A 1040px,#1C2630 1054px,#82AED8 1058px,#90BAE2 1120px,#86B0D8 1160px,#5C7A96 1200px,#4A627A 1240px,#526C86 1356px)"></div>
<div class="ab" style="left:6px;top:813px;width:54px;height:22px;border:1px solid #243444;border-bottom:none;border-radius:3px 3px 0 0;background:radial-gradient(ellipse at 15% 0%,#E8EEF4 0,#C4D4E2 45%,#A4C0DA 100%);box-shadow:inset 1px 1px rgba(255,255,255,0.7)"></div>
<div class="ab" style="left:61px;top:813px;width:5px;height:22px;background:linear-gradient(90deg,#2A3A4A 0 1px,#7A9ABA 1px 2px,#2A3A4A 2px 3px,#8AAACA 3px 4px,#2A3A4A 4px)"></div>
<div class="ab" style="left:68px;top:813px;width:54px;height:22px;border:1px solid #243444;border-bottom:none;border-radius:3px 3px 0 0;background:radial-gradient(ellipse at 15% 0%,#E8EEF4 0,#C4D4E2 45%,#A4C0DA 100%);box-shadow:inset 1px 1px rgba(255,255,255,0.7)"></div>
<div class="ab" style="left:123px;top:813px;width:5px;height:22px;background:linear-gradient(90deg,#2A3A4A 0 1px,#7A9ABA 1px 2px,#2A3A4A 2px 3px,#8AAACA 3px 4px,#2A3A4A 4px)"></div>
<div class="ab" style="left:130px;top:813px;width:59px;height:22px;border:1px solid #243444;border-bottom:none;border-radius:3px 3px 0 0;background:radial-gradient(ellipse at 15% 0%,#E8EEF4 0,#C4D4E2 45%,#A4C0DA 100%);box-shadow:inset 1px 1px rgba(255,255,255,0.7)"></div>
<div class="ab" style="left:190px;top:813px;width:5px;height:22px;background:linear-gradient(90deg,#2A3A4A 0 1px,#7A9ABA 1px 2px,#2A3A4A 2px 3px,#8AAACA 3px 4px,#2A3A4A 4px)"></div>
<div class="ab" style="left:192px;top:813px;width:59px;height:22px;border:1px solid #243444;border-bottom:none;border-radius:3px 3px 0 0;background:radial-gradient(ellipse at 15% 0%,#E8EEF4 0,#C4D4E2 45%,#A4C0DA 100%);box-shadow:inset 1px 1px rgba(255,255,255,0.7)"></div>
<div class="ab" style="left:252px;top:813px;width:5px;height:22px;background:linear-gradient(90deg,#2A3A4A 0 1px,#7A9ABA 1px 2px,#2A3A4A 2px 3px,#8AAACA 3px 4px,#2A3A4A 4px)"></div>
<div class="ab" style="left:254px;top:813px;width:59px;height:22px;border:1px solid #243444;border-bottom:none;border-radius:3px 3px 0 0;background:radial-gradient(ellipse at 15% 0%,#E8EEF4 0,#C4D4E2 45%,#A4C0DA 100%);box-shadow:inset 1px 1px rgba(255,255,255,0.7)"></div>
<div class="ab" style="left:314px;top:813px;width:5px;height:22px;background:linear-gradient(90deg,#2A3A4A 0 1px,#7A9ABA 1px 2px,#2A3A4A 2px 3px,#8AAACA 3px 4px,#2A3A4A 4px)"></div>
<div class="ab" style="left:316px;top:813px;width:59px;height:22px;border:1px solid #243444;border-bottom:none;border-radius:3px 3px 0 0;background:radial-gradient(ellipse at 15% 0%,#E8EEF4 0,#C4D4E2 45%,#A4C0DA 100%);box-shadow:inset 1px 1px rgba(255,255,255,0.7)"></div>
<div class="ab" style="left:376px;top:813px;width:5px;height:22px;background:linear-gradient(90deg,#2A3A4A 0 1px,#7A9ABA 1px 2px,#2A3A4A 2px 3px,#8AAACA 3px 4px,#2A3A4A 4px)"></div>
<div class="ab" style="left:378px;top:813px;width:59px;height:22px;border:1px solid #243444;border-bottom:none;border-radius:3px 3px 0 0;background:radial-gradient(ellipse at 15% 0%,#E8EEF4 0,#C4D4E2 45%,#A4C0DA 100%);box-shadow:inset 1px 1px rgba(255,255,255,0.7)"></div>
<div class="ab" style="left:438px;top:813px;width:5px;height:22px;background:linear-gradient(90deg,#2A3A4A 0 1px,#7A9ABA 1px 2px,#2A3A4A 2px 3px,#8AAACA 3px 4px,#2A3A4A 4px)"></div>
<svg style="left:17px;top:816px" width="31" height="19"><path d="M0,4 L18,0 L18,19 L0,19Z" fill="#0A6CC8"/><rect x="18" y="7" width="12" height="12" fill="#fff" stroke="#0A6CC8" stroke-width="1.5"/><path d="M18,7 L24,13 L30,7" stroke="#0A6CC8" fill="none" stroke-width="1.5"/><ellipse cx="8.5" cy="14.5" rx="4" ry="5" fill="none" stroke="#fff" stroke-width="3"/></svg>
<svg style="left:79px;top:817px" width="31" height="18"><circle cx="15" cy="15" r="15" fill="#DB4437"/><path d="M15,15 L2,22.5 A15,15 0 0 1 2,7.5Z" fill="#0F9D58"/><path d="M15,15 L28,7.5 A15,15 0 0 1 28,22.5 Z" fill="#F4B400"/><circle cx="15" cy="15" r="7" fill="#fff"/><circle cx="15" cy="15" r="5.5" fill="#4285F4"/></svg>
<svg style="left:144px;top:817px" width="31" height="18"><circle cx="16" cy="15" r="14" fill="#1A70C8"/><path d="M18,1 Q28,4 30,14 L28,18 Q26,8 18,1Z" fill="#F8C030"/><path d="M2,14 Q3,6 8,3 Q7,7 9,9 Q13,7 16,9 Q12,10 12,14 Q13,18 18,19 L1,19 Q1,16 2,14Z" fill="#F07820"/><path d="M6,4 L9,0 L10,5Z" fill="#F89030"/></svg>
<svg style="left:205px;top:818px" width="31" height="17"><path d="M0,13 Q12,2 30,6 Q14,6 0,13Z" fill="#2090E0"/><path d="M2,16 Q16,8 30,11 Q15,11 2,16Z" fill="#40C060"/><path d="M6,9 Q16,3 28,4" stroke="#80D0F0" fill="none"/></svg>
<svg style="left:268px;top:816px" width="30" height="19"><path d="M4,0 L24,4 L21,19 L0,19Z" fill="#0A20A0"/><path d="M7,3 L21,6 L19,17 L5,17Z" fill="#3070F0"/><path d="M9,6 L17,8 L13,15" fill="#90C0FF"/><circle cx="24" cy="18" r="4" fill="#fff" stroke="#808080"/></svg>
<svg style="left:330px;top:816px" width="31" height="19"><circle cx="15" cy="15" r="14" fill="#0A88E0"/><circle cx="15" cy="15" r="8.5" fill="#fff"/><rect x="15" y="12" width="14" height="7" fill="#fff"/><rect x="17" y="14" width="10" height="4" fill="#0A88E0"/></svg>
<svg style="left:393px;top:816px" width="28" height="19"><rect x="1" y="1" width="25" height="19" fill="#F0F4F8" stroke="#8090A0"/><rect x="3" y="3" width="21" height="7" fill="#F8E0A0" stroke="#A0B0C0" stroke-width="0.6"/><rect x="5" y="5" width="17" height="4" fill="#fff" stroke="#7080A0" stroke-width="0.5"/><text x="15" y="9" font-size="5" fill="#000" font-family="Liberation Mono">0</text><path d="M4,13 L23,13 M4,16 L23,16 M4,19 L23,19" stroke="#5070A0" stroke-dasharray="1.5 1.5"/></svg>
<svg style="left:1198px;top:826px" width="10" height="9"><path d="M1,8 L5,4 L9,8Z" fill="#fff"/></svg>
<svg style="left:1219px;top:819px" width="16" height="16"><path d="M2,1 L2,16" stroke="#fff" stroke-width="1.5"/><path d="M3,2 L13,2 L11,6 L13,10 L3,10Z" fill="#fff"/><circle cx="12" cy="13" r="3.2" fill="#E02020"/><path d="M10.5,11.5 L13.5,14.5 M13.5,11.5 L10.5,14.5" stroke="#fff" stroke-width="1"/></svg>
<svg style="left:1244px;top:819px" width="18" height="16"><path d="M3,1 L3,6 M6,1 L6,6 M2,6 L7,6 L7,9 L2,9Z M4.5,9 L4.5,16" stroke="#fff" fill="none" stroke-width="1.2"/><rect x="8" y="6" width="9" height="10" fill="#203040" stroke="#fff"/></svg>
<svg style="left:1268px;top:820px" width="16" height="15"><path d="M1,6 L4,6 L8,2 L8,15 L4,11 L1,11Z" fill="#fff"/><path d="M10,5 Q12,8.5 10,12 M12,3 Q15,8.5 12,14" stroke="#fff" fill="none" stroke-width="1.2"/></svg>
<div class="t" style="left:1317px;top:819px;font-size:12px;color:#fff;letter-spacing:-0.2px">18:31</div>
</body></html>
